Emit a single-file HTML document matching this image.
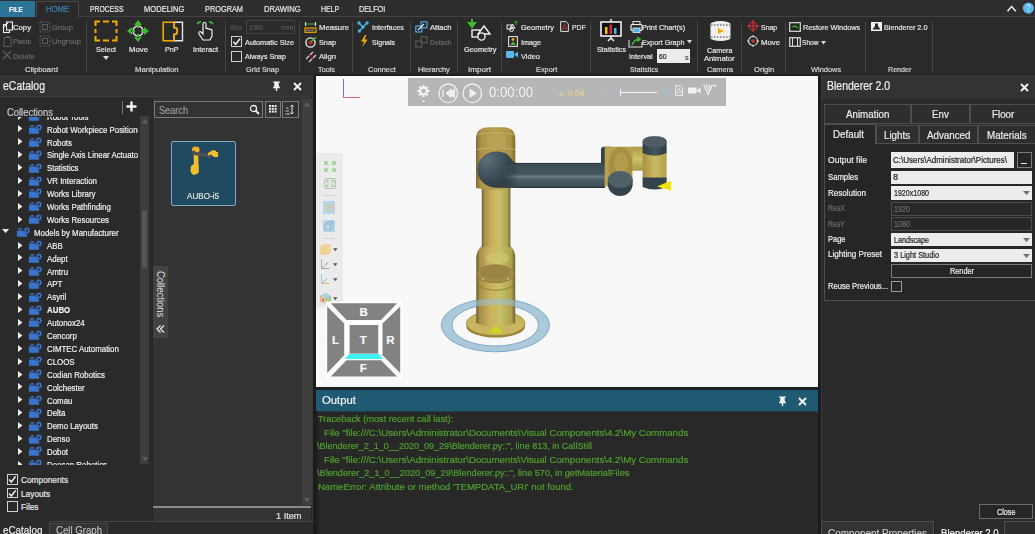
<!DOCTYPE html>
<html><head><meta charset="utf-8">
<style>
*{margin:0;padding:0;box-sizing:border-box}
html,body{width:1035px;height:534px;overflow:hidden;background:#1e1e1e;font-family:"Liberation Sans",sans-serif;}
.a{position:absolute}
.t{position:absolute;white-space:nowrap;line-height:normal;color:#e6e6e6;-webkit-text-stroke:0.2px currentColor}
svg{overflow:visible}
</style></head><body>
<div class="a" style="left:0px;top:0px;width:1035px;height:17px;background:#2e2e2e;"></div>
<div class="a" style="left:0px;top:16px;width:1035px;height:1px;background:#424242;"></div>
<div class="a" style="left:0px;top:1px;width:35px;height:15.5px;background:#2b7498;"></div>
<div class="t" style="left:8.9px;top:4.56px;font-size:8px;color:#f4f4f4;font-weight:bold;transform:scaleX(0.7962);transform-origin:0 0;">FILE</div>
<div class="a" style="left:36px;top:0.5px;width:43.2px;height:16.5px;background:#2a2a2a;border:1px solid #474747;border-bottom:none"></div>
<div class="t" style="left:46.1px;top:4.21px;font-size:8.5px;color:#3a84b8;transform:scaleX(0.9098);transform-origin:0 0;">HOME</div>
<div class="t" style="left:89.8px;top:4.21px;font-size:8.5px;color:#e8e8e8;transform:scaleX(0.8059);transform-origin:0 0;">PROCESS</div>
<div class="t" style="left:144px;top:4.21px;font-size:8.5px;color:#e8e8e8;transform:scaleX(0.8889);transform-origin:0 0;">MODELING</div>
<div class="t" style="left:205px;top:4.21px;font-size:8.5px;color:#e8e8e8;transform:scaleX(0.8652);transform-origin:0 0;">PROGRAM</div>
<div class="t" style="left:263.7px;top:4.21px;font-size:8.5px;color:#e8e8e8;transform:scaleX(0.8978);transform-origin:0 0;">DRAWING</div>
<div class="t" style="left:320.6px;top:4.21px;font-size:8.5px;color:#e8e8e8;transform:scaleX(0.8151);transform-origin:0 0;">HELP</div>
<div class="t" style="left:358.9px;top:4.21px;font-size:8.5px;color:#e8e8e8;transform:scaleX(0.8567);transform-origin:0 0;">DELFOI</div>
<svg class="a" style="left:1005px;top:3px;" width="14" height="10" viewBox="0 0 14 10"><path d="M2.5 8.3 L6.6 3.6 L10.8 8.3" stroke="#f4f4f4" stroke-width="1.5" fill="none"/></svg>
<svg class="a" style="left:1022px;top:2px;" width="13" height="13" viewBox="0 0 13 13"><circle cx="6.4" cy="6.1" r="5.6" fill="#5ab6ee"/><path d="M4.7 4.4 Q4.8 2.8 6.4 2.8 Q8 2.8 8 4.3 Q8 5.3 6.9 5.9 Q6.4 6.2 6.4 7.3" stroke="#f4f4f4" stroke-width="1" fill="none"/><rect x="5.9" y="8.3" width="1" height="1.1" fill="#f4f4f4"/></svg>
<div class="a" style="left:0px;top:17px;width:1035px;height:57px;background:#2a2a2a;"></div>
<div class="a" style="left:0px;top:74px;width:1035px;height:2px;background:#1e1e1e;"></div>
<div class="a" style="left:86px;top:21.7px;width:1px;height:50px;background:#464646;"></div>
<div class="a" style="left:224.7px;top:21.7px;width:1px;height:50px;background:#464646;"></div>
<div class="a" style="left:299.4px;top:21.7px;width:1px;height:50px;background:#464646;"></div>
<div class="a" style="left:351.9px;top:21.7px;width:1px;height:50px;background:#464646;"></div>
<div class="a" style="left:409.5px;top:21.7px;width:1px;height:50px;background:#464646;"></div>
<div class="a" style="left:456.6px;top:21.7px;width:1px;height:50px;background:#464646;"></div>
<div class="a" style="left:500.7px;top:21.7px;width:1px;height:50px;background:#464646;"></div>
<div class="a" style="left:589.8px;top:21.7px;width:1px;height:50px;background:#464646;"></div>
<div class="a" style="left:696.5px;top:21.7px;width:1px;height:50px;background:#464646;"></div>
<div class="a" style="left:741px;top:21.7px;width:1px;height:50px;background:#464646;"></div>
<div class="a" style="left:784.6px;top:21.7px;width:1px;height:50px;background:#464646;"></div>
<div class="a" style="left:865px;top:21.7px;width:1px;height:50px;background:#464646;"></div>
<div class="a" style="left:932.3px;top:21.7px;width:1px;height:50px;background:#464646;"></div>
<div class="t" style="left:25px;top:64.96px;font-size:8px;color:#d8d8d8;transform:scaleX(0.9637);transform-origin:0 0;">Clipboard</div>
<div class="t" style="left:134.8px;top:64.96px;font-size:8px;color:#d8d8d8;transform:scaleX(0.9611);transform-origin:0 0;">Manipulation</div>
<div class="t" style="left:246px;top:64.96px;font-size:8px;color:#d8d8d8;transform:scaleX(0.9162);transform-origin:0 0;">Grid Snap</div>
<div class="t" style="left:318px;top:64.96px;font-size:8px;color:#d8d8d8;transform:scaleX(0.9103);transform-origin:0 0;">Tools</div>
<div class="t" style="left:367.8px;top:64.96px;font-size:8px;color:#d8d8d8;transform:scaleX(0.9330);transform-origin:0 0;">Connect</div>
<div class="t" style="left:418px;top:64.96px;font-size:8px;color:#d8d8d8;transform:scaleX(0.9261);transform-origin:0 0;">Hierarchy</div>
<div class="t" style="left:468px;top:64.96px;font-size:8px;color:#d8d8d8;transform:scaleX(1.0145);transform-origin:0 0;">Import</div>
<div class="t" style="left:535.7px;top:64.96px;font-size:8px;color:#d8d8d8;transform:scaleX(0.9212);transform-origin:0 0;">Export</div>
<div class="t" style="left:630px;top:64.96px;font-size:8px;color:#d8d8d8;transform:scaleX(0.8873);transform-origin:0 0;">Statistics</div>
<div class="t" style="left:707px;top:64.96px;font-size:8px;color:#d8d8d8;transform:scaleX(0.9138);transform-origin:0 0;">Camera</div>
<div class="t" style="left:753.8px;top:64.96px;font-size:8px;color:#d8d8d8;transform:scaleX(0.9466);transform-origin:0 0;">Origin</div>
<div class="t" style="left:810.6px;top:64.96px;font-size:8px;color:#d8d8d8;transform:scaleX(0.9275);transform-origin:0 0;">Windows</div>
<div class="t" style="left:888px;top:64.96px;font-size:8px;color:#d8d8d8;transform:scaleX(0.8918);transform-origin:0 0;">Render</div>
<svg class="a" style="left:2px;top:21px;" width="11" height="12" viewBox="0 0 11 12"><rect x="1.5" y="3.5" width="6" height="8" fill="#2a2a2a" stroke="#eee" stroke-width="1.1"/><rect x="4.5" y="1" width="6" height="8" fill="#2a2a2a" stroke="#eee" stroke-width="1.1"/><path d="M2 6 L6 2" stroke="#eee"/></svg>
<div class="t" style="left:13px;top:22.56px;font-size:8px;color:#e6e6e6;transform:scaleX(0.9638);transform-origin:0 0;">Copy</div>
<svg class="a" style="left:3px;top:35px;" width="9" height="12" viewBox="0 0 9 12"><rect x="1" y="2.5" width="7" height="9" fill="none" stroke="#5c5c5c" stroke-width="1"/><rect x="3" y="1" width="3" height="2" fill="#5c5c5c"/></svg>
<div class="t" style="left:13px;top:37.26px;font-size:8px;color:#6a6a6a;transform:scaleX(0.9043);transform-origin:0 0;">Paste</div>
<svg class="a" style="left:2px;top:50px;" width="10" height="10" viewBox="0 0 10 10"><path d="M1 1 L9 9 M9 1 L1 9" stroke="#5c5c5c" stroke-width="1.2"/></svg>
<div class="t" style="left:13px;top:52.26px;font-size:8px;color:#6a6a6a;transform:scaleX(0.9513);transform-origin:0 0;">Delete</div>
<svg class="a" style="left:39px;top:21px;" width="12" height="12" viewBox="0 0 12 12"><rect x="1" y="1" width="10" height="10" fill="none" stroke="#5c5c5c" stroke-dasharray="2 1.5"/><rect x="3.5" y="3.5" width="5" height="5" fill="none" stroke="#5c5c5c"/></svg>
<div class="t" style="left:52px;top:22.56px;font-size:8px;color:#6a6a6a;transform:scaleX(0.9445);transform-origin:0 0;">Group</div>
<svg class="a" style="left:39px;top:35px;" width="12" height="12" viewBox="0 0 12 12"><rect x="1" y="1" width="10" height="10" fill="none" stroke="#5c5c5c" stroke-dasharray="2 1.5"/><rect x="3.5" y="3.5" width="5" height="5" fill="none" stroke="#5c5c5c"/></svg>
<div class="t" style="left:52px;top:37.26px;font-size:8px;color:#6a6a6a;transform:scaleX(0.9450);transform-origin:0 0;">Ungroup</div>
<svg class="a" style="left:94px;top:20px;" width="24" height="22" viewBox="0 0 24 22"><path d="M1.5 6 V1.5 H6 M9 1.5 H15 M18 1.5 H22.5 V6 M22.5 9 V13 M22.5 16 V20.5 H18 M15 20.5 H9 M6 20.5 H1.5 V16 M1.5 13 V9" fill="none" stroke="#f2a900" stroke-width="2"/></svg>
<div class="t" style="left:96px;top:45.16px;font-size:8px;color:#e6e6e6;transform:scaleX(0.8995);transform-origin:0 0;">Select</div>
<svg class="a" style="left:103px;top:56px;" width="6" height="4" viewBox="0 0 6 4"><path d="M0 0 L6 0 L3 4Z" fill="#ddd"/></svg>
<svg class="a" style="left:127px;top:20px;" width="22" height="22" viewBox="0 0 22 22"><circle cx="11" cy="11" r="5" fill="none" stroke="#eee" stroke-width="1.3"/><path d="M11 0 L15 5 L7 5Z M11 22 L15 17 L7 17Z M0 11 L5 7 L5 15Z M22 11 L17 7 L17 15Z M10 4 h2 v4 h-2z M10 14 h2 v4 h-2z M4 10 v2 h4 v-2z M14 10 v2 h4 v-2z" fill="#3dba2e"/></svg>
<div class="t" style="left:129px;top:45.16px;font-size:8px;color:#e6e6e6;transform:scaleX(0.9712);transform-origin:0 0;">Move</div>
<svg class="a" style="left:162px;top:21px;" width="22" height="21" viewBox="0 0 22 21"><path d="M20.5 1.2 H12 V6.5 C16.5 6.5 16.5 13.5 12 13.5 V19.8 H20.5Z" fill="none" stroke="#e6e6e6" stroke-width="1.4"/><path d="M12 1.2 H1.2 V19.8 H12 V13.5 C16.5 13.5 16.5 6.5 12 6.5Z" fill="none" stroke="#f2a900" stroke-width="1.6"/></svg>
<div class="t" style="left:165px;top:45.16px;font-size:8px;color:#e6e6e6;transform:scaleX(0.8928);transform-origin:0 0;">PnP</div>
<svg class="a" style="left:195px;top:19px;" width="20" height="23" viewBox="0 0 20 23"><path d="M8 21 L4 15 C3 13 5 12 6 13 L8 15 V5 C8 3 11 3 11 5 V10 C11 9 13 9 13 10.5 C13 9.5 15 9.5 15 11 C15 10 17 10 17 11.5 V17 L15 21Z" fill="none" stroke="#eee" stroke-width="1.2"/><path d="M2 5 Q4 2.5 6 3 M14 3 Q16 2.5 18 5" stroke="#3dba2e" stroke-width="1.8" fill="none"/></svg>
<div class="t" style="left:192.6px;top:45.16px;font-size:8px;color:#e6e6e6;transform:scaleX(0.9370);transform-origin:0 0;">Interact</div>
<div class="t" style="left:229.8px;top:22.76px;font-size:8px;color:#5a5a5a;transform:scaleX(0.8032);transform-origin:0 0;">Size</div>
<div class="a" style="left:246.4px;top:19.5px;width:48.4px;height:14.2px;background:transparent;border:1px solid #444"></div>
<div class="t" style="left:248.5px;top:22.76px;font-size:8px;color:#5a5a5a;transform:scaleX(0.7866);transform-origin:0 0;">1000</div>
<div class="t" style="left:280.5px;top:22.76px;font-size:8px;color:#5a5a5a;transform:scaleX(0.9379);transform-origin:0 0;">mm</div>
<div class="a" style="left:230.8px;top:35.6px;width:11.2px;height:11.2px;background:transparent;border:1px solid #cfcfcf"></div>
<svg class="a" style="left:230.8px;top:35.6px;" width="11.2" height="11.2" viewBox="0 0 11.2 11.2"><path d="M2.3 5.8 L4.6 8.3 L9 2.8" stroke="#f0f0f0" stroke-width="1.5" fill="none"/></svg>
<div class="a" style="left:230.8px;top:50.5px;width:11.2px;height:11.2px;background:transparent;border:1px solid #cfcfcf"></div>
<div class="t" style="left:245px;top:37.56px;font-size:8px;color:#e6e6e6;transform:scaleX(0.9184);transform-origin:0 0;">Automatic Size</div>
<div class="t" style="left:245px;top:52.26px;font-size:8px;color:#e6e6e6;transform:scaleX(0.8866);transform-origin:0 0;">Always Snap</div>
<svg class="a" style="left:304px;top:21px;" width="13" height="12" viewBox="0 0 13 12"><path d="M1.5 1 V5 M11.5 1 V5 M2 3 H11" stroke="#3dba2e" stroke-width="1.1" fill="none"/><path d="M1.5 1 V5 M11.5 1 V5" stroke="#ddd" stroke-width="1.1"/><rect x="1" y="7" width="11" height="4.3" fill="none" stroke="#f2a900" stroke-width="1.2"/><path d="M3 8.5 v1.5 M5 8.5 v1.5 M7 8.5 v1.5 M9 8.5 v1.5" stroke="#ddd" stroke-width="0.8"/></svg>
<div class="t" style="left:319px;top:22.76px;font-size:8px;color:#e6e6e6;transform:scaleX(0.9638);transform-origin:0 0;">Measure</div>
<svg class="a" style="left:305px;top:36px;" width="12" height="12" viewBox="0 0 12 12"><circle cx="5.5" cy="6.5" r="4.6" fill="none" stroke="#eee" stroke-width="1.3"/><circle cx="5.5" cy="6.5" r="2" fill="#d02020"/><path d="M6 6 L11 1" stroke="#3dba2e" stroke-width="1.5"/></svg>
<div class="t" style="left:319px;top:37.56px;font-size:8px;color:#e6e6e6;transform:scaleX(0.9099);transform-origin:0 0;">Snap</div>
<svg class="a" style="left:305px;top:51px;" width="12" height="12" viewBox="0 0 12 12"><path d="M1 8 L8 1 M4 11 L11 4" stroke="#ddd" stroke-width="1.1"/><circle cx="4.5" cy="4.5" r="1.1" fill="#d02020"/><circle cx="7.5" cy="7.5" r="1.1" fill="#d02020"/></svg>
<div class="t" style="left:319px;top:52.26px;font-size:8px;color:#e6e6e6;transform:scaleX(0.9556);transform-origin:0 0;">Align</div>
<svg class="a" style="left:357px;top:21px;" width="12" height="11" viewBox="0 0 12 11"><path d="M2 2 L6 6 L10 2 M6 6 L2.5 10" stroke="#4ab3ea" stroke-width="1.3" fill="none"/><circle cx="2" cy="2" r="1.7" fill="#4ab3ea"/><circle cx="10" cy="2" r="1.7" fill="#4ab3ea"/><circle cx="6" cy="6" r="1.7" fill="#4ab3ea"/><circle cx="2.5" cy="10" r="1.7" fill="#4ab3ea"/></svg>
<div class="t" style="left:372px;top:22.76px;font-size:8px;color:#e6e6e6;transform:scaleX(0.9109);transform-origin:0 0;">Interfaces</div>
<svg class="a" style="left:360px;top:35px;" width="8" height="12" viewBox="0 0 8 12"><path d="M5 0 L1 6.5 H4 L2.5 12 L7.5 4.5 H4.5 L6.5 0Z" fill="#f2a900"/></svg>
<div class="t" style="left:372px;top:37.56px;font-size:8px;color:#e6e6e6;transform:scaleX(0.8766);transform-origin:0 0;">Signals</div>
<svg class="a" style="left:415px;top:21px;" width="13" height="12" viewBox="0 0 13 12"><rect x="0.8" y="5" width="6" height="6" fill="none" stroke="#4ab3ea" stroke-width="1.1"/><rect x="6" y="0.8" width="6" height="6" fill="none" stroke="#4ab3ea" stroke-width="1.1"/><path d="M3 9 L9 3" stroke="#eee" stroke-width="1.1"/></svg>
<div class="t" style="left:429.6px;top:22.76px;font-size:8px;color:#e6e6e6;transform:scaleX(0.9524);transform-origin:0 0;">Attach</div>
<svg class="a" style="left:415px;top:36px;" width="13" height="12" viewBox="0 0 13 12"><rect x="0.8" y="5" width="6" height="6" fill="none" stroke="#5c5c5c" stroke-width="1.1"/><rect x="6" y="0.8" width="6" height="6" fill="none" stroke="#5c5c5c" stroke-width="1.1"/></svg>
<div class="t" style="left:429.6px;top:37.56px;font-size:8px;color:#6a6a6a;transform:scaleX(0.8521);transform-origin:0 0;">Detach</div>
<svg class="a" style="left:468px;top:19px;" width="24" height="24" viewBox="0 0 24 24"><path d="M4 0 V5 M1 4 L4 8 L7 4Z" stroke="#3dba2e" stroke-width="2" fill="#3dba2e"/><rect x="4" y="11" width="8" height="7" fill="#2a2a2a" stroke="#f0f0f0" stroke-width="1.4"/><path d="M16 7 L22 15 H10Z" fill="#2a2a2a" stroke="#f0f0f0" stroke-width="1.4"/><circle cx="13.5" cy="17.5" r="3.6" fill="#2a2a2a" stroke="#f0f0f0" stroke-width="1.4"/></svg>
<div class="t" style="left:463.6px;top:45.16px;font-size:8px;color:#e6e6e6;transform:scaleX(0.9225);transform-origin:0 0;">Geometry</div>
<svg class="a" style="left:506px;top:21px;" width="12" height="11" viewBox="0 0 12 11"><rect x="1" y="4" width="5" height="4" fill="none" stroke="#eee" stroke-width="1"/><path d="M6.5 3 L9 7 H4Z" fill="none" stroke="#eee" stroke-width="1"/><circle cx="5.5" cy="8.5" r="2" fill="none" stroke="#eee" stroke-width="1"/><path d="M10 0 V4 M8.5 1.5 L10 0 L11.5 1.5" stroke="#3dba2e" stroke-width="1"/></svg>
<div class="t" style="left:520.8px;top:22.76px;font-size:8px;color:#e6e6e6;transform:scaleX(0.9368);transform-origin:0 0;">Geometry</div>
<svg class="a" style="left:560px;top:21px;" width="9" height="11" viewBox="0 0 9 11"><path d="M0.6 0.6 H6 L8.4 3 V10.4 H0.6Z" fill="none" stroke="#ddd" stroke-width="1"/><path d="M2 8.5 C3 6 4 4 4.5 2.5 C5 5 6 7 7 7.5 C5 7 3 7.5 2 8.5Z" fill="none" stroke="#d03030" stroke-width="0.8"/></svg>
<div class="t" style="left:572.4px;top:22.76px;font-size:8px;color:#e6e6e6;transform:scaleX(0.8500);transform-origin:0 0;">PDF</div>
<svg class="a" style="left:508px;top:36px;" width="10" height="11" viewBox="0 0 10 11"><rect x="0.6" y="0.6" width="8.8" height="9.8" fill="none" stroke="#ddd" stroke-width="1.1"/><circle cx="5" cy="3.5" r="1.4" fill="#f2a900"/><path d="M2 9 L5 5.5 L8 9Z" fill="#3dba2e"/></svg>
<div class="t" style="left:521px;top:37.56px;font-size:8px;color:#e6e6e6;transform:scaleX(0.8995);transform-origin:0 0;">Image</div>
<svg class="a" style="left:506px;top:50px;" width="12" height="9" viewBox="0 0 12 9"><rect x="0" y="1" width="8" height="7" rx="1" fill="#5ab7ea"/><path d="M8 4.5 L12 1.5 V7.5Z" fill="#5ab7ea"/></svg>
<div class="t" style="left:521px;top:52.26px;font-size:8px;color:#e6e6e6;transform:scaleX(0.9352);transform-origin:0 0;">Video</div>
<svg class="a" style="left:600px;top:19px;" width="22" height="23" viewBox="0 0 22 23"><rect x="1" y="3" width="20" height="14" fill="#111" stroke="#f0f0f0" stroke-width="1.6"/><path d="M11 0 V3 M11 17 V20 M8 22 L11 19 L14 22" stroke="#f0f0f0" stroke-width="1.5" fill="none"/><rect x="5" y="8" width="2.5" height="7" fill="#f2c400"/><rect x="9.5" y="5.5" width="2.5" height="9.5" fill="#e02a2a"/><rect x="14" y="9" width="2.5" height="6" fill="#4ab3ea"/></svg>
<div class="t" style="left:596.5px;top:45.16px;font-size:8px;color:#e6e6e6;transform:scaleX(0.9060);transform-origin:0 0;">Statistics</div>
<svg class="a" style="left:630px;top:21px;" width="13" height="12" viewBox="0 0 13 12"><rect x="1" y="3.5" width="11" height="6" rx="1" fill="none" stroke="#eee" stroke-width="1.2"/><rect x="3" y="0.6" width="7" height="3" fill="none" stroke="#eee" stroke-width="1"/><rect x="3" y="7" width="7" height="4.5" fill="#4ab3ea" stroke="#eee" stroke-width="0.8"/></svg>
<div class="t" style="left:642.3px;top:22.76px;font-size:8px;color:#e6e6e6;transform:scaleX(0.9062);transform-origin:0 0;">Print Chart(s)</div>
<svg class="a" style="left:628px;top:36px;" width="15" height="12" viewBox="0 0 15 12"><path d="M1 4 V11 H14 V6" fill="none" stroke="#ddd" stroke-width="1.1"/><path d="M4 9 Q6 4 11 3 M9 1 L12 3 L9.5 5.5" stroke="#3dba2e" stroke-width="1.5" fill="none"/></svg>
<div class="t" style="left:642.3px;top:37.76px;font-size:8px;color:#e6e6e6;transform:scaleX(0.8933);transform-origin:0 0;">Export Graph</div>
<svg class="a" style="left:687px;top:40px;" width="5" height="3.5" viewBox="0 0 5 3.5"><path d="M0 0 H5 L2.5 3.5Z" fill="#ddd"/></svg>
<div class="t" style="left:629px;top:51.96px;font-size:8px;color:#e6e6e6;transform:scaleX(0.8996);transform-origin:0 0;">Interval</div>
<div class="a" style="left:656.8px;top:49.4px;width:32.9px;height:13.6px;background:#ececec;"></div>
<div class="t" style="left:659px;top:51.96px;font-size:8px;color:#222;transform:scaleX(0.8428);transform-origin:0 0;">60</div>
<div class="t" style="left:685px;top:53.66px;font-size:7px;color:#444;transform:scaleX(1.0000);transform-origin:0 0;">s</div>
<svg class="a" style="left:709px;top:20px;" width="23" height="22" viewBox="0 0 23 22"><ellipse cx="11.5" cy="4" rx="10" ry="3" fill="#f0f0f0"/><rect x="1.5" y="4" width="20" height="14" fill="#f0f0f0"/><ellipse cx="11.5" cy="18" rx="10" ry="3" fill="#f0f0f0"/><path d="M2 5 h19 M2 17 h19" stroke="#333" stroke-width="1" stroke-dasharray="1.5 1.5"/><path d="M9 8 L15 11 L9 14Z" fill="#f2a900"/></svg>
<div class="t" style="left:707.4px;top:45.96px;font-size:8px;color:#e6e6e6;transform:scaleX(0.8962);transform-origin:0 0;">Camera</div>
<div class="t" style="left:703.9px;top:53.76px;font-size:8px;color:#e6e6e6;transform:scaleX(0.9559);transform-origin:0 0;">Animator</div>
<svg class="a" style="left:747px;top:20px;" width="12" height="12" viewBox="0 0 12 12"><circle cx="6" cy="6" r="3.8" fill="none" stroke="#e03030" stroke-width="1.1"/><path d="M6 0 V12 M0 6 H12" stroke="#e03030" stroke-width="1.1"/></svg>
<div class="t" style="left:761.4px;top:22.76px;font-size:8px;color:#e6e6e6;transform:scaleX(0.8671);transform-origin:0 0;">Snap</div>
<svg class="a" style="left:747px;top:35px;" width="12" height="12" viewBox="0 0 12 12"><circle cx="6" cy="6" r="4.5" fill="none" stroke="#ddd" stroke-width="1.2"/><circle cx="6" cy="6" r="1.8" fill="#e03030"/><path d="M6 0 V1.5 M6 10.5 V12 M0 6 H1.5 M10.5 6 H12" stroke="#ddd" stroke-width="1"/></svg>
<div class="t" style="left:761.4px;top:37.56px;font-size:8px;color:#e6e6e6;transform:scaleX(0.9712);transform-origin:0 0;">Move</div>
<svg class="a" style="left:789px;top:22px;" width="12" height="10" viewBox="0 0 12 10"><rect x="0.7" y="0.7" width="10.6" height="8.6" fill="#1a2a1a" stroke="#ddd" stroke-width="1.2"/><path d="M3 5 L6 4 L9 6" stroke="#3dba2e" stroke-width="1.2" fill="none"/></svg>
<div class="t" style="left:803.2px;top:22.76px;font-size:8px;color:#e6e6e6;transform:scaleX(0.9125);transform-origin:0 0;">Restore Windows</div>
<svg class="a" style="left:789px;top:37px;" width="12" height="10" viewBox="0 0 12 10"><rect x="0.7" y="0.7" width="10.6" height="8.6" fill="none" stroke="#ddd" stroke-width="1.2"/><path d="M3.5 1 V9 M8.5 1 V9" stroke="#ddd" stroke-width="1"/></svg>
<div class="t" style="left:802px;top:37.76px;font-size:8px;color:#e6e6e6;transform:scaleX(0.8245);transform-origin:0 0;">Show</div>
<svg class="a" style="left:821px;top:41px;" width="5" height="3.5" viewBox="0 0 5 3.5"><path d="M0 0 H5 L2.5 3.5Z" fill="#ddd"/></svg>
<svg class="a" style="left:871px;top:22px;" width="11" height="9" viewBox="0 0 11 9"><rect x="0" y="0" width="11" height="9" fill="#f0f0f0"/><path d="M1.5 7.5 L4 4 H7 L9.5 7.5Z M4 4 V1.5 H7 V4" fill="#2a2a2a"/></svg>
<div class="t" style="left:883.6px;top:22.76px;font-size:8px;color:#e6e6e6;transform:scaleX(0.9036);transform-origin:0 0;">Blenderer 2.0</div>
<div class="a" style="left:0px;top:75px;width:313px;height:459px;background:#2a2a2a;"></div>
<div class="a" style="left:311.5px;top:75px;width:2px;height:447px;background:#3a3a3a;"></div>
<div class="a" style="left:313px;top:76px;width:3px;height:458px;background:#1c1c1c;"></div>
<div class="a" style="left:0px;top:75px;width:311.5px;height:21px;background:#333333;border-top:1px solid #393939"></div>
<div class="a" style="left:0px;top:95.5px;width:311px;height:1.5px;background:#3b3b3b;"></div>
<div class="t" style="left:3px;top:78.99px;font-size:12.5px;color:#eeeeee;transform:scaleX(0.8394);transform-origin:0 0;">eCatalog</div>
<svg class="a" style="left:272px;top:81px;" width="9" height="10" viewBox="0 0 9 10"><path d="M1.2 0.5 H7.8 V1.8 H6.6 L6.9 5.2 L8 6.4 V7.2 H1 V6.4 L2.1 5.2 L2.4 1.8 H1.2Z" fill="#f2f2f2"/><rect x="3.8" y="7" width="1.4" height="3" fill="#f2f2f2"/></svg>
<svg class="a" style="left:292.5px;top:82.2px;" width="9" height="9" viewBox="0 0 9 9"><path d="M1 1 L8 8 M8 1 L1 8" stroke="#f4f4f4" stroke-width="1.9"/></svg>
<div class="a" style="left:0px;top:97px;width:152px;height:425px;background:#2a2a2a;"></div>
<div class="a" style="left:151.5px;top:97px;width:1.7px;height:425px;background:#252525;"></div>
<div class="t" style="left:7px;top:105.55px;font-size:11px;color:#c8c8c8;transform:scaleX(0.8550);transform-origin:0 0;">Collections</div>
<div class="a" style="left:121.8px;top:101px;width:1px;height:13px;background:#777;"></div>
<svg class="a" style="left:126px;top:101px;" width="11" height="11" viewBox="0 0 11 11"><path d="M5.5 0.5 V10.5 M0.5 5.5 H10.5" stroke="#f4f4f4" stroke-width="2.4"/></svg>
<div class="a" style="left:139.7px;top:116px;width:9.5px;height:348px;background:#3d3d3d;"></div>
<svg class="a" style="left:141.5px;top:119px;" width="6" height="5" viewBox="0 0 6 5"><path d="M0 4.5 L3 0 L6 4.5Z" fill="#5e5e5e"/></svg>
<div class="a" style="left:141.8px;top:209.6px;width:5.6px;height:58px;background:#545454;border-radius:3px"></div>
<svg class="a" style="left:141.5px;top:457px;" width="6" height="5" viewBox="0 0 6 5"><path d="M0 0 L3 4.5 L6 0Z" fill="#5e5e5e"/></svg>
<div class="a" style="left:0;top:116.5px;width:137.5px;height:348.5px;overflow:hidden">
<div class="a" style="left:0;top:-116.5px;width:139px;height:600px">
<svg class="a" style="left:17.7px;top:112.5px;" width="4.4" height="7" viewBox="0 0 4.4 7"><path d="M0 0 L4.4 3.5 L0 7Z" fill="#eeeeee"/></svg>
<svg class="a" style="left:26px;top:109.0px;" width="20" height="14" viewBox="0 0 20 14"><path d="M3.9 4.8 C4.6 2.5 7.6 2.5 8.6 4.6Z" fill="#3a74cc"/><path d="M2.9 5.6 H9 L13.1 9.4 V11.8 H2.9Z" fill="#3a74cc"/><rect x="12.2" y="2.4" width="1.3" height="6.2" fill="#3a74cc" transform="rotate(0 12.85 5.5)"/><rect x="12.2" y="2.4" width="1.3" height="6.2" fill="#3a74cc" transform="rotate(45 12.85 5.5)"/><rect x="12.2" y="2.4" width="1.3" height="6.2" fill="#3a74cc" transform="rotate(90 12.85 5.5)"/><rect x="12.2" y="2.4" width="1.3" height="6.2" fill="#3a74cc" transform="rotate(135 12.85 5.5)"/><circle cx="12.85" cy="5.5" r="2.3" fill="#3a74cc"/><circle cx="12.85" cy="5.5" r="1.1" fill="#2a1a14"/></svg>
<div class="t" style="left:47px;top:111.79px;font-size:8.3px;color:#eeeeee;transform:scaleX(0.9500);transform-origin:0 0;">Robot Tools</div>
<svg class="a" style="left:17.7px;top:125.39999999999999px;" width="4.4" height="7" viewBox="0 0 4.4 7"><path d="M0 0 L4.4 3.5 L0 7Z" fill="#eeeeee"/></svg>
<svg class="a" style="left:26px;top:121.89999999999999px;" width="20" height="14" viewBox="0 0 20 14"><path d="M3.9 4.8 C4.6 2.5 7.6 2.5 8.6 4.6Z" fill="#3a74cc"/><path d="M2.9 5.6 H9 L13.1 9.4 V11.8 H2.9Z" fill="#3a74cc"/><rect x="12.2" y="2.4" width="1.3" height="6.2" fill="#3a74cc" transform="rotate(0 12.85 5.5)"/><rect x="12.2" y="2.4" width="1.3" height="6.2" fill="#3a74cc" transform="rotate(45 12.85 5.5)"/><rect x="12.2" y="2.4" width="1.3" height="6.2" fill="#3a74cc" transform="rotate(90 12.85 5.5)"/><rect x="12.2" y="2.4" width="1.3" height="6.2" fill="#3a74cc" transform="rotate(135 12.85 5.5)"/><circle cx="12.85" cy="5.5" r="2.3" fill="#3a74cc"/><circle cx="12.85" cy="5.5" r="1.1" fill="#2a1a14"/></svg>
<div class="t" style="left:47px;top:124.69px;font-size:8.3px;color:#eeeeee;transform:scaleX(0.9500);transform-origin:0 0;">Robot Workpiece Positioners</div>
<svg class="a" style="left:17.7px;top:138.29999999999998px;" width="4.4" height="7" viewBox="0 0 4.4 7"><path d="M0 0 L4.4 3.5 L0 7Z" fill="#eeeeee"/></svg>
<svg class="a" style="left:26px;top:134.79999999999998px;" width="20" height="14" viewBox="0 0 20 14"><path d="M3.9 4.8 C4.6 2.5 7.6 2.5 8.6 4.6Z" fill="#3a74cc"/><path d="M2.9 5.6 H9 L13.1 9.4 V11.8 H2.9Z" fill="#3a74cc"/><rect x="12.2" y="2.4" width="1.3" height="6.2" fill="#3a74cc" transform="rotate(0 12.85 5.5)"/><rect x="12.2" y="2.4" width="1.3" height="6.2" fill="#3a74cc" transform="rotate(45 12.85 5.5)"/><rect x="12.2" y="2.4" width="1.3" height="6.2" fill="#3a74cc" transform="rotate(90 12.85 5.5)"/><rect x="12.2" y="2.4" width="1.3" height="6.2" fill="#3a74cc" transform="rotate(135 12.85 5.5)"/><circle cx="12.85" cy="5.5" r="2.3" fill="#3a74cc"/><circle cx="12.85" cy="5.5" r="1.1" fill="#2a1a14"/></svg>
<div class="t" style="left:47px;top:137.59px;font-size:8.3px;color:#eeeeee;transform:scaleX(0.9500);transform-origin:0 0;">Robots</div>
<svg class="a" style="left:17.7px;top:151.2px;" width="4.4" height="7" viewBox="0 0 4.4 7"><path d="M0 0 L4.4 3.5 L0 7Z" fill="#eeeeee"/></svg>
<svg class="a" style="left:26px;top:147.7px;" width="20" height="14" viewBox="0 0 20 14"><path d="M3.9 4.8 C4.6 2.5 7.6 2.5 8.6 4.6Z" fill="#3a74cc"/><path d="M2.9 5.6 H9 L13.1 9.4 V11.8 H2.9Z" fill="#3a74cc"/><rect x="12.2" y="2.4" width="1.3" height="6.2" fill="#3a74cc" transform="rotate(0 12.85 5.5)"/><rect x="12.2" y="2.4" width="1.3" height="6.2" fill="#3a74cc" transform="rotate(45 12.85 5.5)"/><rect x="12.2" y="2.4" width="1.3" height="6.2" fill="#3a74cc" transform="rotate(90 12.85 5.5)"/><rect x="12.2" y="2.4" width="1.3" height="6.2" fill="#3a74cc" transform="rotate(135 12.85 5.5)"/><circle cx="12.85" cy="5.5" r="2.3" fill="#3a74cc"/><circle cx="12.85" cy="5.5" r="1.1" fill="#2a1a14"/></svg>
<div class="t" style="left:47px;top:150.49px;font-size:8.3px;color:#eeeeee;transform:scaleX(0.9500);transform-origin:0 0;">Single Axis Linear Actuators</div>
<svg class="a" style="left:17.7px;top:164.1px;" width="4.4" height="7" viewBox="0 0 4.4 7"><path d="M0 0 L4.4 3.5 L0 7Z" fill="#eeeeee"/></svg>
<svg class="a" style="left:26px;top:160.6px;" width="20" height="14" viewBox="0 0 20 14"><path d="M3.9 4.8 C4.6 2.5 7.6 2.5 8.6 4.6Z" fill="#3a74cc"/><path d="M2.9 5.6 H9 L13.1 9.4 V11.8 H2.9Z" fill="#3a74cc"/><rect x="12.2" y="2.4" width="1.3" height="6.2" fill="#3a74cc" transform="rotate(0 12.85 5.5)"/><rect x="12.2" y="2.4" width="1.3" height="6.2" fill="#3a74cc" transform="rotate(45 12.85 5.5)"/><rect x="12.2" y="2.4" width="1.3" height="6.2" fill="#3a74cc" transform="rotate(90 12.85 5.5)"/><rect x="12.2" y="2.4" width="1.3" height="6.2" fill="#3a74cc" transform="rotate(135 12.85 5.5)"/><circle cx="12.85" cy="5.5" r="2.3" fill="#3a74cc"/><circle cx="12.85" cy="5.5" r="1.1" fill="#2a1a14"/></svg>
<div class="t" style="left:47px;top:163.39px;font-size:8.3px;color:#eeeeee;transform:scaleX(0.9500);transform-origin:0 0;">Statistics</div>
<svg class="a" style="left:17.7px;top:177.0px;" width="4.4" height="7" viewBox="0 0 4.4 7"><path d="M0 0 L4.4 3.5 L0 7Z" fill="#eeeeee"/></svg>
<svg class="a" style="left:26px;top:173.5px;" width="20" height="14" viewBox="0 0 20 14"><path d="M3.9 4.8 C4.6 2.5 7.6 2.5 8.6 4.6Z" fill="#3a74cc"/><path d="M2.9 5.6 H9 L13.1 9.4 V11.8 H2.9Z" fill="#3a74cc"/><rect x="12.2" y="2.4" width="1.3" height="6.2" fill="#3a74cc" transform="rotate(0 12.85 5.5)"/><rect x="12.2" y="2.4" width="1.3" height="6.2" fill="#3a74cc" transform="rotate(45 12.85 5.5)"/><rect x="12.2" y="2.4" width="1.3" height="6.2" fill="#3a74cc" transform="rotate(90 12.85 5.5)"/><rect x="12.2" y="2.4" width="1.3" height="6.2" fill="#3a74cc" transform="rotate(135 12.85 5.5)"/><circle cx="12.85" cy="5.5" r="2.3" fill="#3a74cc"/><circle cx="12.85" cy="5.5" r="1.1" fill="#2a1a14"/></svg>
<div class="t" style="left:47px;top:176.29px;font-size:8.3px;color:#eeeeee;transform:scaleX(0.9500);transform-origin:0 0;">VR Interaction</div>
<svg class="a" style="left:17.7px;top:189.89999999999998px;" width="4.4" height="7" viewBox="0 0 4.4 7"><path d="M0 0 L4.4 3.5 L0 7Z" fill="#eeeeee"/></svg>
<svg class="a" style="left:26px;top:186.39999999999998px;" width="20" height="14" viewBox="0 0 20 14"><path d="M3.9 4.8 C4.6 2.5 7.6 2.5 8.6 4.6Z" fill="#3a74cc"/><path d="M2.9 5.6 H9 L13.1 9.4 V11.8 H2.9Z" fill="#3a74cc"/><rect x="12.2" y="2.4" width="1.3" height="6.2" fill="#3a74cc" transform="rotate(0 12.85 5.5)"/><rect x="12.2" y="2.4" width="1.3" height="6.2" fill="#3a74cc" transform="rotate(45 12.85 5.5)"/><rect x="12.2" y="2.4" width="1.3" height="6.2" fill="#3a74cc" transform="rotate(90 12.85 5.5)"/><rect x="12.2" y="2.4" width="1.3" height="6.2" fill="#3a74cc" transform="rotate(135 12.85 5.5)"/><circle cx="12.85" cy="5.5" r="2.3" fill="#3a74cc"/><circle cx="12.85" cy="5.5" r="1.1" fill="#2a1a14"/></svg>
<div class="t" style="left:47px;top:189.19px;font-size:8.3px;color:#eeeeee;transform:scaleX(0.9500);transform-origin:0 0;">Works Library</div>
<svg class="a" style="left:17.7px;top:202.79999999999998px;" width="4.4" height="7" viewBox="0 0 4.4 7"><path d="M0 0 L4.4 3.5 L0 7Z" fill="#eeeeee"/></svg>
<svg class="a" style="left:26px;top:199.29999999999998px;" width="20" height="14" viewBox="0 0 20 14"><path d="M3.9 4.8 C4.6 2.5 7.6 2.5 8.6 4.6Z" fill="#3a74cc"/><path d="M2.9 5.6 H9 L13.1 9.4 V11.8 H2.9Z" fill="#3a74cc"/><rect x="12.2" y="2.4" width="1.3" height="6.2" fill="#3a74cc" transform="rotate(0 12.85 5.5)"/><rect x="12.2" y="2.4" width="1.3" height="6.2" fill="#3a74cc" transform="rotate(45 12.85 5.5)"/><rect x="12.2" y="2.4" width="1.3" height="6.2" fill="#3a74cc" transform="rotate(90 12.85 5.5)"/><rect x="12.2" y="2.4" width="1.3" height="6.2" fill="#3a74cc" transform="rotate(135 12.85 5.5)"/><circle cx="12.85" cy="5.5" r="2.3" fill="#3a74cc"/><circle cx="12.85" cy="5.5" r="1.1" fill="#2a1a14"/></svg>
<div class="t" style="left:47px;top:202.09px;font-size:8.3px;color:#eeeeee;transform:scaleX(0.9500);transform-origin:0 0;">Works Pathfinding</div>
<svg class="a" style="left:17.7px;top:215.7px;" width="4.4" height="7" viewBox="0 0 4.4 7"><path d="M0 0 L4.4 3.5 L0 7Z" fill="#eeeeee"/></svg>
<svg class="a" style="left:26px;top:212.2px;" width="20" height="14" viewBox="0 0 20 14"><path d="M3.9 4.8 C4.6 2.5 7.6 2.5 8.6 4.6Z" fill="#3a74cc"/><path d="M2.9 5.6 H9 L13.1 9.4 V11.8 H2.9Z" fill="#3a74cc"/><rect x="12.2" y="2.4" width="1.3" height="6.2" fill="#3a74cc" transform="rotate(0 12.85 5.5)"/><rect x="12.2" y="2.4" width="1.3" height="6.2" fill="#3a74cc" transform="rotate(45 12.85 5.5)"/><rect x="12.2" y="2.4" width="1.3" height="6.2" fill="#3a74cc" transform="rotate(90 12.85 5.5)"/><rect x="12.2" y="2.4" width="1.3" height="6.2" fill="#3a74cc" transform="rotate(135 12.85 5.5)"/><circle cx="12.85" cy="5.5" r="2.3" fill="#3a74cc"/><circle cx="12.85" cy="5.5" r="1.1" fill="#2a1a14"/></svg>
<div class="t" style="left:47px;top:214.99px;font-size:8.3px;color:#eeeeee;transform:scaleX(0.9500);transform-origin:0 0;">Works Resources</div>
<svg class="a" style="left:2px;top:228.8px;" width="7.2" height="4" viewBox="0 0 7.2 4"><path d="M0 0 H7.2 L3.6 4Z" fill="#eeeeee"/></svg>
<svg class="a" style="left:13.6px;top:225.1px;" width="20" height="14" viewBox="0 0 20 14"><path d="M3.9 4.8 C4.6 2.5 7.6 2.5 8.6 4.6Z" fill="#3a74cc"/><path d="M2.9 5.6 H9 L13.1 9.4 V11.8 H2.9Z" fill="#3a74cc"/><rect x="12.2" y="2.4" width="1.3" height="6.2" fill="#3a74cc" transform="rotate(0 12.85 5.5)"/><rect x="12.2" y="2.4" width="1.3" height="6.2" fill="#3a74cc" transform="rotate(45 12.85 5.5)"/><rect x="12.2" y="2.4" width="1.3" height="6.2" fill="#3a74cc" transform="rotate(90 12.85 5.5)"/><rect x="12.2" y="2.4" width="1.3" height="6.2" fill="#3a74cc" transform="rotate(135 12.85 5.5)"/><circle cx="12.85" cy="5.5" r="2.3" fill="#3a74cc"/><circle cx="12.85" cy="5.5" r="1.1" fill="#2a1a14"/></svg>
<div class="t" style="left:34px;top:227.89px;font-size:8.3px;color:#eeeeee;transform:scaleX(0.9500);transform-origin:0 0;">Models by Manufacturer</div>
<svg class="a" style="left:17.7px;top:241.5px;" width="4.4" height="7" viewBox="0 0 4.4 7"><path d="M0 0 L4.4 3.5 L0 7Z" fill="#eeeeee"/></svg>
<svg class="a" style="left:26px;top:238.0px;" width="20" height="14" viewBox="0 0 20 14"><path d="M3.9 4.8 C4.6 2.5 7.6 2.5 8.6 4.6Z" fill="#3a74cc"/><path d="M2.9 5.6 H9 L13.1 9.4 V11.8 H2.9Z" fill="#3a74cc"/><rect x="12.2" y="2.4" width="1.3" height="6.2" fill="#3a74cc" transform="rotate(0 12.85 5.5)"/><rect x="12.2" y="2.4" width="1.3" height="6.2" fill="#3a74cc" transform="rotate(45 12.85 5.5)"/><rect x="12.2" y="2.4" width="1.3" height="6.2" fill="#3a74cc" transform="rotate(90 12.85 5.5)"/><rect x="12.2" y="2.4" width="1.3" height="6.2" fill="#3a74cc" transform="rotate(135 12.85 5.5)"/><circle cx="12.85" cy="5.5" r="2.3" fill="#3a74cc"/><circle cx="12.85" cy="5.5" r="1.1" fill="#2a1a14"/></svg>
<div class="t" style="left:47px;top:240.79px;font-size:8.3px;color:#eeeeee;transform:scaleX(0.9500);transform-origin:0 0;">ABB</div>
<svg class="a" style="left:17.7px;top:254.39999999999998px;" width="4.4" height="7" viewBox="0 0 4.4 7"><path d="M0 0 L4.4 3.5 L0 7Z" fill="#eeeeee"/></svg>
<svg class="a" style="left:26px;top:250.89999999999998px;" width="20" height="14" viewBox="0 0 20 14"><path d="M3.9 4.8 C4.6 2.5 7.6 2.5 8.6 4.6Z" fill="#3a74cc"/><path d="M2.9 5.6 H9 L13.1 9.4 V11.8 H2.9Z" fill="#3a74cc"/><rect x="12.2" y="2.4" width="1.3" height="6.2" fill="#3a74cc" transform="rotate(0 12.85 5.5)"/><rect x="12.2" y="2.4" width="1.3" height="6.2" fill="#3a74cc" transform="rotate(45 12.85 5.5)"/><rect x="12.2" y="2.4" width="1.3" height="6.2" fill="#3a74cc" transform="rotate(90 12.85 5.5)"/><rect x="12.2" y="2.4" width="1.3" height="6.2" fill="#3a74cc" transform="rotate(135 12.85 5.5)"/><circle cx="12.85" cy="5.5" r="2.3" fill="#3a74cc"/><circle cx="12.85" cy="5.5" r="1.1" fill="#2a1a14"/></svg>
<div class="t" style="left:47px;top:253.69px;font-size:8.3px;color:#eeeeee;transform:scaleX(0.9500);transform-origin:0 0;">Adept</div>
<svg class="a" style="left:17.7px;top:267.3px;" width="4.4" height="7" viewBox="0 0 4.4 7"><path d="M0 0 L4.4 3.5 L0 7Z" fill="#eeeeee"/></svg>
<svg class="a" style="left:26px;top:263.8px;" width="20" height="14" viewBox="0 0 20 14"><path d="M3.9 4.8 C4.6 2.5 7.6 2.5 8.6 4.6Z" fill="#3a74cc"/><path d="M2.9 5.6 H9 L13.1 9.4 V11.8 H2.9Z" fill="#3a74cc"/><rect x="12.2" y="2.4" width="1.3" height="6.2" fill="#3a74cc" transform="rotate(0 12.85 5.5)"/><rect x="12.2" y="2.4" width="1.3" height="6.2" fill="#3a74cc" transform="rotate(45 12.85 5.5)"/><rect x="12.2" y="2.4" width="1.3" height="6.2" fill="#3a74cc" transform="rotate(90 12.85 5.5)"/><rect x="12.2" y="2.4" width="1.3" height="6.2" fill="#3a74cc" transform="rotate(135 12.85 5.5)"/><circle cx="12.85" cy="5.5" r="2.3" fill="#3a74cc"/><circle cx="12.85" cy="5.5" r="1.1" fill="#2a1a14"/></svg>
<div class="t" style="left:47px;top:266.59px;font-size:8.3px;color:#eeeeee;transform:scaleX(0.9500);transform-origin:0 0;">Amtru</div>
<svg class="a" style="left:17.7px;top:280.2px;" width="4.4" height="7" viewBox="0 0 4.4 7"><path d="M0 0 L4.4 3.5 L0 7Z" fill="#eeeeee"/></svg>
<svg class="a" style="left:26px;top:276.7px;" width="20" height="14" viewBox="0 0 20 14"><path d="M3.9 4.8 C4.6 2.5 7.6 2.5 8.6 4.6Z" fill="#3a74cc"/><path d="M2.9 5.6 H9 L13.1 9.4 V11.8 H2.9Z" fill="#3a74cc"/><rect x="12.2" y="2.4" width="1.3" height="6.2" fill="#3a74cc" transform="rotate(0 12.85 5.5)"/><rect x="12.2" y="2.4" width="1.3" height="6.2" fill="#3a74cc" transform="rotate(45 12.85 5.5)"/><rect x="12.2" y="2.4" width="1.3" height="6.2" fill="#3a74cc" transform="rotate(90 12.85 5.5)"/><rect x="12.2" y="2.4" width="1.3" height="6.2" fill="#3a74cc" transform="rotate(135 12.85 5.5)"/><circle cx="12.85" cy="5.5" r="2.3" fill="#3a74cc"/><circle cx="12.85" cy="5.5" r="1.1" fill="#2a1a14"/></svg>
<div class="t" style="left:47px;top:279.49px;font-size:8.3px;color:#eeeeee;transform:scaleX(0.9500);transform-origin:0 0;">APT</div>
<svg class="a" style="left:17.7px;top:293.09999999999997px;" width="4.4" height="7" viewBox="0 0 4.4 7"><path d="M0 0 L4.4 3.5 L0 7Z" fill="#eeeeee"/></svg>
<svg class="a" style="left:26px;top:289.59999999999997px;" width="20" height="14" viewBox="0 0 20 14"><path d="M3.9 4.8 C4.6 2.5 7.6 2.5 8.6 4.6Z" fill="#3a74cc"/><path d="M2.9 5.6 H9 L13.1 9.4 V11.8 H2.9Z" fill="#3a74cc"/><rect x="12.2" y="2.4" width="1.3" height="6.2" fill="#3a74cc" transform="rotate(0 12.85 5.5)"/><rect x="12.2" y="2.4" width="1.3" height="6.2" fill="#3a74cc" transform="rotate(45 12.85 5.5)"/><rect x="12.2" y="2.4" width="1.3" height="6.2" fill="#3a74cc" transform="rotate(90 12.85 5.5)"/><rect x="12.2" y="2.4" width="1.3" height="6.2" fill="#3a74cc" transform="rotate(135 12.85 5.5)"/><circle cx="12.85" cy="5.5" r="2.3" fill="#3a74cc"/><circle cx="12.85" cy="5.5" r="1.1" fill="#2a1a14"/></svg>
<div class="t" style="left:47px;top:292.39px;font-size:8.3px;color:#eeeeee;transform:scaleX(0.9500);transform-origin:0 0;">Asyril</div>
<svg class="a" style="left:17.7px;top:306.0px;" width="4.4" height="7" viewBox="0 0 4.4 7"><path d="M0 0 L4.4 3.5 L0 7Z" fill="#eeeeee"/></svg>
<svg class="a" style="left:26px;top:302.5px;" width="20" height="14" viewBox="0 0 20 14"><path d="M3.9 4.8 C4.6 2.5 7.6 2.5 8.6 4.6Z" fill="#3a74cc"/><path d="M2.9 5.6 H9 L13.1 9.4 V11.8 H2.9Z" fill="#3a74cc"/><rect x="12.2" y="2.4" width="1.3" height="6.2" fill="#3a74cc" transform="rotate(0 12.85 5.5)"/><rect x="12.2" y="2.4" width="1.3" height="6.2" fill="#3a74cc" transform="rotate(45 12.85 5.5)"/><rect x="12.2" y="2.4" width="1.3" height="6.2" fill="#3a74cc" transform="rotate(90 12.85 5.5)"/><rect x="12.2" y="2.4" width="1.3" height="6.2" fill="#3a74cc" transform="rotate(135 12.85 5.5)"/><circle cx="12.85" cy="5.5" r="2.3" fill="#3a74cc"/><circle cx="12.85" cy="5.5" r="1.1" fill="#2a1a14"/></svg>
<div class="t" style="left:47px;top:305.29px;font-size:8.3px;color:#eeeeee;font-weight:bold;transform:scaleX(0.9500);transform-origin:0 0;">AUBO</div>
<svg class="a" style="left:17.7px;top:318.9px;" width="4.4" height="7" viewBox="0 0 4.4 7"><path d="M0 0 L4.4 3.5 L0 7Z" fill="#eeeeee"/></svg>
<svg class="a" style="left:26px;top:315.4px;" width="20" height="14" viewBox="0 0 20 14"><path d="M3.9 4.8 C4.6 2.5 7.6 2.5 8.6 4.6Z" fill="#3a74cc"/><path d="M2.9 5.6 H9 L13.1 9.4 V11.8 H2.9Z" fill="#3a74cc"/><rect x="12.2" y="2.4" width="1.3" height="6.2" fill="#3a74cc" transform="rotate(0 12.85 5.5)"/><rect x="12.2" y="2.4" width="1.3" height="6.2" fill="#3a74cc" transform="rotate(45 12.85 5.5)"/><rect x="12.2" y="2.4" width="1.3" height="6.2" fill="#3a74cc" transform="rotate(90 12.85 5.5)"/><rect x="12.2" y="2.4" width="1.3" height="6.2" fill="#3a74cc" transform="rotate(135 12.85 5.5)"/><circle cx="12.85" cy="5.5" r="2.3" fill="#3a74cc"/><circle cx="12.85" cy="5.5" r="1.1" fill="#2a1a14"/></svg>
<div class="t" style="left:47px;top:318.19px;font-size:8.3px;color:#eeeeee;transform:scaleX(0.9500);transform-origin:0 0;">Autonox24</div>
<svg class="a" style="left:17.7px;top:331.8px;" width="4.4" height="7" viewBox="0 0 4.4 7"><path d="M0 0 L4.4 3.5 L0 7Z" fill="#eeeeee"/></svg>
<svg class="a" style="left:26px;top:328.3px;" width="20" height="14" viewBox="0 0 20 14"><path d="M3.9 4.8 C4.6 2.5 7.6 2.5 8.6 4.6Z" fill="#3a74cc"/><path d="M2.9 5.6 H9 L13.1 9.4 V11.8 H2.9Z" fill="#3a74cc"/><rect x="12.2" y="2.4" width="1.3" height="6.2" fill="#3a74cc" transform="rotate(0 12.85 5.5)"/><rect x="12.2" y="2.4" width="1.3" height="6.2" fill="#3a74cc" transform="rotate(45 12.85 5.5)"/><rect x="12.2" y="2.4" width="1.3" height="6.2" fill="#3a74cc" transform="rotate(90 12.85 5.5)"/><rect x="12.2" y="2.4" width="1.3" height="6.2" fill="#3a74cc" transform="rotate(135 12.85 5.5)"/><circle cx="12.85" cy="5.5" r="2.3" fill="#3a74cc"/><circle cx="12.85" cy="5.5" r="1.1" fill="#2a1a14"/></svg>
<div class="t" style="left:47px;top:331.09px;font-size:8.3px;color:#eeeeee;transform:scaleX(0.9500);transform-origin:0 0;">Cencorp</div>
<svg class="a" style="left:17.7px;top:344.7px;" width="4.4" height="7" viewBox="0 0 4.4 7"><path d="M0 0 L4.4 3.5 L0 7Z" fill="#eeeeee"/></svg>
<svg class="a" style="left:26px;top:341.2px;" width="20" height="14" viewBox="0 0 20 14"><path d="M3.9 4.8 C4.6 2.5 7.6 2.5 8.6 4.6Z" fill="#3a74cc"/><path d="M2.9 5.6 H9 L13.1 9.4 V11.8 H2.9Z" fill="#3a74cc"/><rect x="12.2" y="2.4" width="1.3" height="6.2" fill="#3a74cc" transform="rotate(0 12.85 5.5)"/><rect x="12.2" y="2.4" width="1.3" height="6.2" fill="#3a74cc" transform="rotate(45 12.85 5.5)"/><rect x="12.2" y="2.4" width="1.3" height="6.2" fill="#3a74cc" transform="rotate(90 12.85 5.5)"/><rect x="12.2" y="2.4" width="1.3" height="6.2" fill="#3a74cc" transform="rotate(135 12.85 5.5)"/><circle cx="12.85" cy="5.5" r="2.3" fill="#3a74cc"/><circle cx="12.85" cy="5.5" r="1.1" fill="#2a1a14"/></svg>
<div class="t" style="left:47px;top:343.99px;font-size:8.3px;color:#eeeeee;transform:scaleX(0.9500);transform-origin:0 0;">CIMTEC Automation</div>
<svg class="a" style="left:17.7px;top:357.59999999999997px;" width="4.4" height="7" viewBox="0 0 4.4 7"><path d="M0 0 L4.4 3.5 L0 7Z" fill="#eeeeee"/></svg>
<svg class="a" style="left:26px;top:354.09999999999997px;" width="20" height="14" viewBox="0 0 20 14"><path d="M3.9 4.8 C4.6 2.5 7.6 2.5 8.6 4.6Z" fill="#3a74cc"/><path d="M2.9 5.6 H9 L13.1 9.4 V11.8 H2.9Z" fill="#3a74cc"/><rect x="12.2" y="2.4" width="1.3" height="6.2" fill="#3a74cc" transform="rotate(0 12.85 5.5)"/><rect x="12.2" y="2.4" width="1.3" height="6.2" fill="#3a74cc" transform="rotate(45 12.85 5.5)"/><rect x="12.2" y="2.4" width="1.3" height="6.2" fill="#3a74cc" transform="rotate(90 12.85 5.5)"/><rect x="12.2" y="2.4" width="1.3" height="6.2" fill="#3a74cc" transform="rotate(135 12.85 5.5)"/><circle cx="12.85" cy="5.5" r="2.3" fill="#3a74cc"/><circle cx="12.85" cy="5.5" r="1.1" fill="#2a1a14"/></svg>
<div class="t" style="left:47px;top:356.89px;font-size:8.3px;color:#eeeeee;transform:scaleX(0.9500);transform-origin:0 0;">CLOOS</div>
<svg class="a" style="left:17.7px;top:370.5px;" width="4.4" height="7" viewBox="0 0 4.4 7"><path d="M0 0 L4.4 3.5 L0 7Z" fill="#eeeeee"/></svg>
<svg class="a" style="left:26px;top:367.0px;" width="20" height="14" viewBox="0 0 20 14"><path d="M3.9 4.8 C4.6 2.5 7.6 2.5 8.6 4.6Z" fill="#3a74cc"/><path d="M2.9 5.6 H9 L13.1 9.4 V11.8 H2.9Z" fill="#3a74cc"/><rect x="12.2" y="2.4" width="1.3" height="6.2" fill="#3a74cc" transform="rotate(0 12.85 5.5)"/><rect x="12.2" y="2.4" width="1.3" height="6.2" fill="#3a74cc" transform="rotate(45 12.85 5.5)"/><rect x="12.2" y="2.4" width="1.3" height="6.2" fill="#3a74cc" transform="rotate(90 12.85 5.5)"/><rect x="12.2" y="2.4" width="1.3" height="6.2" fill="#3a74cc" transform="rotate(135 12.85 5.5)"/><circle cx="12.85" cy="5.5" r="2.3" fill="#3a74cc"/><circle cx="12.85" cy="5.5" r="1.1" fill="#2a1a14"/></svg>
<div class="t" style="left:47px;top:369.79px;font-size:8.3px;color:#eeeeee;transform:scaleX(0.9500);transform-origin:0 0;">Codian Robotics</div>
<svg class="a" style="left:17.7px;top:383.40000000000003px;" width="4.4" height="7" viewBox="0 0 4.4 7"><path d="M0 0 L4.4 3.5 L0 7Z" fill="#eeeeee"/></svg>
<svg class="a" style="left:26px;top:379.90000000000003px;" width="20" height="14" viewBox="0 0 20 14"><path d="M3.9 4.8 C4.6 2.5 7.6 2.5 8.6 4.6Z" fill="#3a74cc"/><path d="M2.9 5.6 H9 L13.1 9.4 V11.8 H2.9Z" fill="#3a74cc"/><rect x="12.2" y="2.4" width="1.3" height="6.2" fill="#3a74cc" transform="rotate(0 12.85 5.5)"/><rect x="12.2" y="2.4" width="1.3" height="6.2" fill="#3a74cc" transform="rotate(45 12.85 5.5)"/><rect x="12.2" y="2.4" width="1.3" height="6.2" fill="#3a74cc" transform="rotate(90 12.85 5.5)"/><rect x="12.2" y="2.4" width="1.3" height="6.2" fill="#3a74cc" transform="rotate(135 12.85 5.5)"/><circle cx="12.85" cy="5.5" r="2.3" fill="#3a74cc"/><circle cx="12.85" cy="5.5" r="1.1" fill="#2a1a14"/></svg>
<div class="t" style="left:47px;top:382.69px;font-size:8.3px;color:#eeeeee;transform:scaleX(0.9500);transform-origin:0 0;">Colchester</div>
<svg class="a" style="left:17.7px;top:396.3px;" width="4.4" height="7" viewBox="0 0 4.4 7"><path d="M0 0 L4.4 3.5 L0 7Z" fill="#eeeeee"/></svg>
<svg class="a" style="left:26px;top:392.8px;" width="20" height="14" viewBox="0 0 20 14"><path d="M3.9 4.8 C4.6 2.5 7.6 2.5 8.6 4.6Z" fill="#3a74cc"/><path d="M2.9 5.6 H9 L13.1 9.4 V11.8 H2.9Z" fill="#3a74cc"/><rect x="12.2" y="2.4" width="1.3" height="6.2" fill="#3a74cc" transform="rotate(0 12.85 5.5)"/><rect x="12.2" y="2.4" width="1.3" height="6.2" fill="#3a74cc" transform="rotate(45 12.85 5.5)"/><rect x="12.2" y="2.4" width="1.3" height="6.2" fill="#3a74cc" transform="rotate(90 12.85 5.5)"/><rect x="12.2" y="2.4" width="1.3" height="6.2" fill="#3a74cc" transform="rotate(135 12.85 5.5)"/><circle cx="12.85" cy="5.5" r="2.3" fill="#3a74cc"/><circle cx="12.85" cy="5.5" r="1.1" fill="#2a1a14"/></svg>
<div class="t" style="left:47px;top:395.59px;font-size:8.3px;color:#eeeeee;transform:scaleX(0.9500);transform-origin:0 0;">Comau</div>
<svg class="a" style="left:17.7px;top:409.2px;" width="4.4" height="7" viewBox="0 0 4.4 7"><path d="M0 0 L4.4 3.5 L0 7Z" fill="#eeeeee"/></svg>
<svg class="a" style="left:26px;top:405.7px;" width="20" height="14" viewBox="0 0 20 14"><path d="M3.9 4.8 C4.6 2.5 7.6 2.5 8.6 4.6Z" fill="#3a74cc"/><path d="M2.9 5.6 H9 L13.1 9.4 V11.8 H2.9Z" fill="#3a74cc"/><rect x="12.2" y="2.4" width="1.3" height="6.2" fill="#3a74cc" transform="rotate(0 12.85 5.5)"/><rect x="12.2" y="2.4" width="1.3" height="6.2" fill="#3a74cc" transform="rotate(45 12.85 5.5)"/><rect x="12.2" y="2.4" width="1.3" height="6.2" fill="#3a74cc" transform="rotate(90 12.85 5.5)"/><rect x="12.2" y="2.4" width="1.3" height="6.2" fill="#3a74cc" transform="rotate(135 12.85 5.5)"/><circle cx="12.85" cy="5.5" r="2.3" fill="#3a74cc"/><circle cx="12.85" cy="5.5" r="1.1" fill="#2a1a14"/></svg>
<div class="t" style="left:47px;top:408.49px;font-size:8.3px;color:#eeeeee;transform:scaleX(0.9500);transform-origin:0 0;">Delta</div>
<svg class="a" style="left:17.7px;top:422.1px;" width="4.4" height="7" viewBox="0 0 4.4 7"><path d="M0 0 L4.4 3.5 L0 7Z" fill="#eeeeee"/></svg>
<svg class="a" style="left:26px;top:418.6px;" width="20" height="14" viewBox="0 0 20 14"><path d="M3.9 4.8 C4.6 2.5 7.6 2.5 8.6 4.6Z" fill="#3a74cc"/><path d="M2.9 5.6 H9 L13.1 9.4 V11.8 H2.9Z" fill="#3a74cc"/><rect x="12.2" y="2.4" width="1.3" height="6.2" fill="#3a74cc" transform="rotate(0 12.85 5.5)"/><rect x="12.2" y="2.4" width="1.3" height="6.2" fill="#3a74cc" transform="rotate(45 12.85 5.5)"/><rect x="12.2" y="2.4" width="1.3" height="6.2" fill="#3a74cc" transform="rotate(90 12.85 5.5)"/><rect x="12.2" y="2.4" width="1.3" height="6.2" fill="#3a74cc" transform="rotate(135 12.85 5.5)"/><circle cx="12.85" cy="5.5" r="2.3" fill="#3a74cc"/><circle cx="12.85" cy="5.5" r="1.1" fill="#2a1a14"/></svg>
<div class="t" style="left:47px;top:421.39px;font-size:8.3px;color:#eeeeee;transform:scaleX(0.9500);transform-origin:0 0;">Demo Layouts</div>
<svg class="a" style="left:17.7px;top:435.0px;" width="4.4" height="7" viewBox="0 0 4.4 7"><path d="M0 0 L4.4 3.5 L0 7Z" fill="#eeeeee"/></svg>
<svg class="a" style="left:26px;top:431.5px;" width="20" height="14" viewBox="0 0 20 14"><path d="M3.9 4.8 C4.6 2.5 7.6 2.5 8.6 4.6Z" fill="#3a74cc"/><path d="M2.9 5.6 H9 L13.1 9.4 V11.8 H2.9Z" fill="#3a74cc"/><rect x="12.2" y="2.4" width="1.3" height="6.2" fill="#3a74cc" transform="rotate(0 12.85 5.5)"/><rect x="12.2" y="2.4" width="1.3" height="6.2" fill="#3a74cc" transform="rotate(45 12.85 5.5)"/><rect x="12.2" y="2.4" width="1.3" height="6.2" fill="#3a74cc" transform="rotate(90 12.85 5.5)"/><rect x="12.2" y="2.4" width="1.3" height="6.2" fill="#3a74cc" transform="rotate(135 12.85 5.5)"/><circle cx="12.85" cy="5.5" r="2.3" fill="#3a74cc"/><circle cx="12.85" cy="5.5" r="1.1" fill="#2a1a14"/></svg>
<div class="t" style="left:47px;top:434.29px;font-size:8.3px;color:#eeeeee;transform:scaleX(0.9500);transform-origin:0 0;">Denso</div>
<svg class="a" style="left:17.7px;top:447.90000000000003px;" width="4.4" height="7" viewBox="0 0 4.4 7"><path d="M0 0 L4.4 3.5 L0 7Z" fill="#eeeeee"/></svg>
<svg class="a" style="left:26px;top:444.40000000000003px;" width="20" height="14" viewBox="0 0 20 14"><path d="M3.9 4.8 C4.6 2.5 7.6 2.5 8.6 4.6Z" fill="#3a74cc"/><path d="M2.9 5.6 H9 L13.1 9.4 V11.8 H2.9Z" fill="#3a74cc"/><rect x="12.2" y="2.4" width="1.3" height="6.2" fill="#3a74cc" transform="rotate(0 12.85 5.5)"/><rect x="12.2" y="2.4" width="1.3" height="6.2" fill="#3a74cc" transform="rotate(45 12.85 5.5)"/><rect x="12.2" y="2.4" width="1.3" height="6.2" fill="#3a74cc" transform="rotate(90 12.85 5.5)"/><rect x="12.2" y="2.4" width="1.3" height="6.2" fill="#3a74cc" transform="rotate(135 12.85 5.5)"/><circle cx="12.85" cy="5.5" r="2.3" fill="#3a74cc"/><circle cx="12.85" cy="5.5" r="1.1" fill="#2a1a14"/></svg>
<div class="t" style="left:47px;top:447.19px;font-size:8.3px;color:#eeeeee;transform:scaleX(0.9500);transform-origin:0 0;">Dobot</div>
<svg class="a" style="left:17.7px;top:460.8px;" width="4.4" height="7" viewBox="0 0 4.4 7"><path d="M0 0 L4.4 3.5 L0 7Z" fill="#eeeeee"/></svg>
<svg class="a" style="left:26px;top:457.3px;" width="20" height="14" viewBox="0 0 20 14"><path d="M3.9 4.8 C4.6 2.5 7.6 2.5 8.6 4.6Z" fill="#3a74cc"/><path d="M2.9 5.6 H9 L13.1 9.4 V11.8 H2.9Z" fill="#3a74cc"/><rect x="12.2" y="2.4" width="1.3" height="6.2" fill="#3a74cc" transform="rotate(0 12.85 5.5)"/><rect x="12.2" y="2.4" width="1.3" height="6.2" fill="#3a74cc" transform="rotate(45 12.85 5.5)"/><rect x="12.2" y="2.4" width="1.3" height="6.2" fill="#3a74cc" transform="rotate(90 12.85 5.5)"/><rect x="12.2" y="2.4" width="1.3" height="6.2" fill="#3a74cc" transform="rotate(135 12.85 5.5)"/><circle cx="12.85" cy="5.5" r="2.3" fill="#3a74cc"/><circle cx="12.85" cy="5.5" r="1.1" fill="#2a1a14"/></svg>
<div class="t" style="left:47px;top:460.09px;font-size:8.3px;color:#eeeeee;transform:scaleX(0.9500);transform-origin:0 0;">Doosan Robotics</div>
</div></div>
<div class="a" style="left:7px;top:474.0px;width:10.5px;height:10.5px;background:transparent;border:1px solid #d0d0d0"></div>
<svg class="a" style="left:7px;top:474.0px;" width="10.5" height="10.5" viewBox="0 0 10.5 10.5"><path d="M2 5.5 L4.3 8 L8.6 2.4" stroke="#f2f2f2" stroke-width="1.5" fill="none"/></svg>
<div class="t" style="left:21px;top:475.19px;font-size:8.3px;color:#e6e6e6;">Components</div>
<div class="a" style="left:7px;top:487.6px;width:10.5px;height:10.5px;background:transparent;border:1px solid #d0d0d0"></div>
<svg class="a" style="left:7px;top:487.6px;" width="10.5" height="10.5" viewBox="0 0 10.5 10.5"><path d="M2 5.5 L4.3 8 L8.6 2.4" stroke="#f2f2f2" stroke-width="1.5" fill="none"/></svg>
<div class="t" style="left:21px;top:488.79px;font-size:8.3px;color:#e6e6e6;">Layouts</div>
<div class="a" style="left:7px;top:501.2px;width:10.5px;height:10.5px;background:transparent;border:1px solid #d0d0d0"></div>
<div class="t" style="left:21px;top:502.39px;font-size:8.3px;color:#e6e6e6;">Files</div>
<div class="a" style="left:153.2px;top:97px;width:158px;height:425px;background:#333333;"></div>
<div class="a" style="left:154px;top:101.3px;width:109px;height:17px;background:transparent;border:1px solid #7a7a7a"></div>
<div class="t" style="left:159px;top:104.95px;font-size:10px;color:#9a9a9a;transform:scaleX(0.9153);transform-origin:0 0;">Search</div>
<svg class="a" style="left:249px;top:104px;" width="11" height="11" viewBox="0 0 11 11"><circle cx="4.5" cy="4.5" r="3" fill="none" stroke="#eee" stroke-width="1.3"/><path d="M6.5 6.5 L10 10" stroke="#eee" stroke-width="2"/></svg>
<div class="a" style="left:264.5px;top:101.3px;width:16px;height:17px;background:transparent;border:1px solid #7a7a7a"></div>
<svg class="a" style="left:267.5px;top:104px;" width="10" height="10" viewBox="0 0 10 10"><rect x="1.0" y="1.0" width="2" height="2" fill="#eee"/><rect x="3.8" y="1.0" width="2" height="2" fill="#eee"/><rect x="6.6" y="1.0" width="2" height="2" fill="#eee"/><rect x="1.0" y="3.8" width="2" height="2" fill="#eee"/><rect x="3.8" y="3.8" width="2" height="2" fill="#eee"/><rect x="6.6" y="3.8" width="2" height="2" fill="#eee"/><rect x="1.0" y="6.6" width="2" height="2" fill="#eee"/><rect x="3.8" y="6.6" width="2" height="2" fill="#eee"/><rect x="6.6" y="6.6" width="2" height="2" fill="#eee"/></svg>
<div class="a" style="left:282px;top:101.3px;width:17px;height:17px;background:transparent;border:1px solid #7a7a7a"></div>
<svg class="a" style="left:285px;top:104px;" width="11" height="11" viewBox="0 0 11 11"><path d="M1 4 H3.5 M0.5 7 H4 M0.5 10 H5" stroke="#ddd" stroke-width="0.9"/><path d="M7 1 V10 M5.5 2.5 L7 1 L8.5 2.5 M5.5 8.5 L7 10 L8.5 8.5" stroke="#eee" stroke-width="1"/></svg>
<div class="a" style="left:302px;top:99px;width:9.5px;height:406px;background:#3f3f3f;"></div>
<svg class="a" style="left:304px;top:101.5px;" width="6" height="5" viewBox="0 0 6 5"><path d="M0 4.5 L3 0 L6 4.5Z" fill="#5e5e5e"/></svg>
<svg class="a" style="left:304px;top:498px;" width="6" height="5" viewBox="0 0 6 5"><path d="M0 0 L3 4.5 L6 0Z" fill="#5e5e5e"/></svg>
<div class="a" style="left:153.2px;top:266px;width:15px;height:71.5px;background:#434343;"></div>
<div class="t" style="left:166px;top:271px;font-size:10px;color:#d4d4d4;-webkit-text-stroke:0.1px currentColor;transform:rotate(90deg) scaleX(0.945);transform-origin:0 0">Collections</div>
<svg class="a" style="left:156px;top:325px;" width="9" height="8" viewBox="0 0 9 8"><path d="M4.5 0.5 L1 4 L4.5 7.5 M8 0.5 L4.5 4 L8 7.5" stroke="#eee" stroke-width="1.2" fill="none"/></svg>
<div class="a" style="left:171px;top:141px;width:65px;height:65px;background:#1f4a5f;border:1px solid #7fa9c0;border-radius:2px"></div>
<svg class="a" style="left:185px;top:143px;" width="40" height="35" viewBox="0 0 40 35"><rect x="8.8" y="9" width="4.6" height="14" fill="#f2bd2a"/><path d="M6 23 Q9 20 13.5 21.5 L14 29 Q12 32 9 32 Q6 31 5.5 28Z" fill="#f2bd2a"/><ellipse cx="10.8" cy="6.8" rx="3.8" ry="3.2" fill="#f0b020"/><path d="M7.5 8 Q9 11 14 11 L23 12" stroke="#505050" stroke-width="3.4" fill="none"/><path d="M23 10 L28 7 L33 8.5 V14 H29 L26 11.5 L23 13Z" fill="#f2c030"/><circle cx="24.5" cy="13.5" r="1.6" fill="#555"/><rect x="31" y="7" width="2.5" height="2" fill="#444"/></svg>
<div class="t" style="left:187.3px;top:190.84px;font-size:8.8px;color:#e0e0e0;transform:scaleX(0.9217);transform-origin:0 0;">AUBO-i5</div>
<div class="a" style="left:153.2px;top:505.8px;width:158px;height:1.8px;background:#8a8a8a;"></div>
<div class="t" style="left:276px;top:510.20px;font-size:9.5px;color:#e0e0e0;transform:scaleX(0.9660);transform-origin:0 0;">1 Item</div>
<div class="a" style="left:0px;top:522px;width:313px;height:12px;background:#2a2a2a;"></div>
<div class="a" style="left:48.5px;top:521px;width:264.5px;height:1px;background:#454545;"></div>
<div class="a" style="left:0px;top:521.5px;width:48.5px;height:12.5px;background:#2a2a2a;"></div>
<div class="t" style="left:2.5px;top:524.00px;font-size:10.5px;color:#eeeeee;transform:scaleX(0.9398);transform-origin:0 0;">eCatalog</div>
<div class="a" style="left:49px;top:522.5px;width:59px;height:12px;background:#333333;border:1px solid #484848;border-bottom:none"></div>
<div class="t" style="left:56px;top:523.50px;font-size:10.5px;color:#bdbdbd;transform:scaleX(0.9166);transform-origin:0 0;">Cell Graph</div>
<div class="a" style="left:316px;top:76px;width:502px;height:311px;background:#f8f8f8;"></div>
<div class="a" style="left:316px;top:387px;width:502px;height:3px;background:#1e1e1e;"></div>
<div class="a" style="left:818px;top:76px;width:4px;height:458px;background:#1c1c1c;"></div>
<div class="a" style="left:343px;top:79px;width:1px;height:18px;background:#6f6ff0;"></div>
<div class="a" style="left:343px;top:97px;width:17px;height:1px;background:#f06a6a;"></div>
<svg class="a" style="left:316px;top:76px" width="502" height="311" viewBox="316 76 502 311"><defs><linearGradient id="gcol" x1="0" x2="1" y1="0" y2="0"><stop offset="0" stop-color="#665828"/><stop offset="0.08" stop-color="#a48f48"/><stop offset="0.35" stop-color="#cdb05e"/><stop offset="0.62" stop-color="#c6c066"/><stop offset="0.9" stop-color="#afa252"/><stop offset="1" stop-color="#6e6230"/></linearGradient><linearGradient id="gcap" x1="0" x2="1" y1="0" y2="0"><stop offset="0" stop-color="#80692e"/><stop offset="0.12" stop-color="#ad9348"/><stop offset="0.5" stop-color="#b8a050"/><stop offset="0.88" stop-color="#ad9348"/><stop offset="1" stop-color="#80692e"/></linearGradient><linearGradient id="garm" x1="0" x2="0" y1="0" y2="1"><stop offset="0" stop-color="#1e2a30"/><stop offset="0.06" stop-color="#3c4d55"/><stop offset="0.45" stop-color="#44565e"/><stop offset="0.55" stop-color="#6a7e86"/><stop offset="0.65" stop-color="#4e6068"/><stop offset="0.94" stop-color="#3e4e56"/><stop offset="1" stop-color="#1a2228"/></linearGradient><radialGradient id="gelb" gradientUnits="userSpaceOnUse" cx="487" cy="160" r="30"><stop offset="0" stop-color="#5c6e77"/><stop offset="0.45" stop-color="#43555e"/><stop offset="1" stop-color="#2e3b41"/></radialGradient><linearGradient id="gw" x1="0" x2="1" y1="0" y2="0"><stop offset="0" stop-color="#a88e42"/><stop offset="0.5" stop-color="#c9bb62"/><stop offset="1" stop-color="#b0a050"/></linearGradient><linearGradient id="gtube" x1="0" x2="0" y1="0" y2="1"><stop offset="0" stop-color="#b09848"/><stop offset="0.5" stop-color="#cbc468"/><stop offset="1" stop-color="#a8984a"/></linearGradient><linearGradient id="gdark" x1="0" x2="1" y1="0" y2="0"><stop offset="0" stop-color="#2e3b42"/><stop offset="0.5" stop-color="#46575f"/><stop offset="1" stop-color="#2e3b42"/></linearGradient><linearGradient id="gfade" gradientUnits="userSpaceOnUse" x1="503" x2="519" y1="0" y2="0"><stop offset="0" stop-color="#fff" stop-opacity="0"/><stop offset="1" stop-color="#fff" stop-opacity="1"/></linearGradient><mask id="mfade" maskUnits="userSpaceOnUse" x="316" y="76" width="502" height="311"><rect x="316" y="76" width="502" height="311" fill="url(#gfade)"/></mask></defs><path fill-rule="evenodd" d="M441.3 325.2 A54.1 26.6 0 0 1 549.5 325.2 A54.1 26.6 0 0 1 441.3 325.2Z M452 325.2 A43.2 20.8 0 0 0 538.4 325.2 A43.2 20.8 0 0 0 452 325.2Z" fill="#acc9d9" stroke="#7eaad0" stroke-width="1"/><ellipse cx="495.7" cy="326.5" rx="29.3" ry="11" fill="#9a8238"/><ellipse cx="495.7" cy="323.5" rx="29.3" ry="12.3" fill="#c9b55e" stroke="#8f7a35" stroke-width="0.7"/><path d="M476.3 257 Q477 250 481.8 246 H510.4 Q515 250 515.2 257 V323 Q495.7 331 476.3 323Z" fill="url(#gcol)"/><ellipse cx="497" cy="258" rx="12" ry="6" fill="#cfcc72" opacity="0.55"/><ellipse cx="495.5" cy="273.8" rx="18.6" ry="9" fill="#a38c47" stroke="#86703a" stroke-width="0.7"/><ellipse cx="495.5" cy="272.5" rx="15" ry="6.5" fill="#9a8443"/><circle cx="483" cy="279" r="1" fill="#c8c070"/><circle cx="508" cy="279" r="1" fill="#c8c070"/><path d="M476.6 285 Q495.5 296 514.8 285" stroke="#8a7535" stroke-width="0.8" fill="none"/><rect x="481.8" y="186" width="28.6" height="61" fill="url(#gcol)"/><path d="M476 188 V141 C476 131 479 127.2 490 127.2 H501.3 C512.3 127.2 515.3 131 515.3 141 V186 Q495.7 193 476 188Z" fill="url(#gcap)"/><path d="M476.3 134.5 Q495.7 131 515 134.5 M476.3 149.6 Q495.7 146 515 149.6" stroke="#c9b264" stroke-width="0.8" fill="none"/><rect x="487" y="135" width="19" height="13.5" fill="#bba35a" opacity="0.7"/><path d="M496.2 151.5 C505 151.5 509 155 512 160 Q513.5 162.9 516 162.9 H605 V187.8 H496.2 C485.6 187.8 477.2 179.6 477.2 169.6 C477.2 159.6 485.6 151.5 496.2 151.5Z" fill="url(#gelb)"/><rect x="500" y="162.9" width="105" height="25" fill="url(#garm)" mask="url(#mfade)"/><path d="M604 146.7 H611.5 V164.2 H601 V149.7 Q601 146.7 604 146.7Z" fill="#34434b"/><rect x="632" y="146.7" width="17" height="24" fill="url(#gtube)"/><rect x="604.7" y="146.7" width="27.8" height="39.7" fill="#b9a24e"/><ellipse cx="620.5" cy="166.5" rx="12" ry="19.5" fill="#a68e44"/><ellipse cx="621" cy="163" rx="7" ry="11" fill="#b39b4c"/><path d="M645 170.7 Q643 175 643 180 H649 V170.7Z" fill="#b8a650"/><path d="M607.8 180 A12.4 7 0 0 1 632.6 180 V184 A12.4 12 0 0 1 607.8 184Z" fill="#34434b"/><ellipse cx="620.2" cy="179.5" rx="12.2" ry="8.5" fill="#4f6068"/><rect x="642.6" y="152" width="24" height="28" fill="url(#gw)"/><path d="M642.6 177.4 H666.6 V187 Q654.6 192 642.6 187Z" fill="#34434b"/><path d="M642.6 142 Q642.6 136.2 654.6 136.2 Q666.6 136.2 666.6 142 V153 Q654.6 158.5 642.6 153Z" fill="url(#gdark)"/><ellipse cx="654.6" cy="142" rx="12" ry="5.6" fill="#4b5c64"/><path d="M657 186.5 L671 180.5 L671 190.5Z" fill="#f0e400"/><clipPath id="cbase"><rect x="476" y="290" width="40" height="25"/></clipPath><path fill-rule="evenodd" d="M441.3 325.2 A54.1 26.6 0 0 1 549.5 325.2 A54.1 26.6 0 0 1 441.3 325.2Z M452 325.2 A43.2 20.8 0 0 0 538.4 325.2 A43.2 20.8 0 0 0 452 325.2Z" fill="#9cc0d8" opacity="0.55" clip-path="url(#cbase)"/><path d="M488.4 333.2 L495.7 325.2 L503 333.2Z" fill="#c8d820"/></svg>
<div class="a" style="left:408px;top:77.8px;width:318px;height:28.7px;background:#b6b6b6;"></div>
<svg class="a" style="left:416.8px;top:85.3px;" width="13" height="18" viewBox="0 0 13 18"><circle cx="6.5" cy="6" r="3.3" fill="none" stroke="#f2f2f2" stroke-width="2.2"/><rect x="5.4" y="0" width="2.2" height="3" fill="#f2f2f2" transform="rotate(0 6.5 6)"/><rect x="5.4" y="0" width="2.2" height="3" fill="#f2f2f2" transform="rotate(45 6.5 6)"/><rect x="5.4" y="0" width="2.2" height="3" fill="#f2f2f2" transform="rotate(90 6.5 6)"/><rect x="5.4" y="0" width="2.2" height="3" fill="#f2f2f2" transform="rotate(135 6.5 6)"/><rect x="5.4" y="0" width="2.2" height="3" fill="#f2f2f2" transform="rotate(180 6.5 6)"/><rect x="5.4" y="0" width="2.2" height="3" fill="#f2f2f2" transform="rotate(225 6.5 6)"/><rect x="5.4" y="0" width="2.2" height="3" fill="#f2f2f2" transform="rotate(270 6.5 6)"/><rect x="5.4" y="0" width="2.2" height="3" fill="#f2f2f2" transform="rotate(315 6.5 6)"/><path d="M4.6 15.5 H8.4 L6.5 17.5Z" fill="#f2f2f2"/></svg>
<svg class="a" style="left:437.5px;top:82.8px;" width="21" height="21" viewBox="0 0 21 21"><circle cx="10.3" cy="10.3" r="9.3" fill="none" stroke="#f0f0f0" stroke-width="1.3"/><path d="M5 6.5 V14 M13 6.5 L8.5 10.3 L13 14Z M16.5 6.5 L12 10.3 L16.5 14Z" stroke="#f0f0f0" stroke-width="1.3" fill="#f0f0f0"/></svg>
<svg class="a" style="left:461.5px;top:82.8px;" width="21" height="21" viewBox="0 0 21 21"><circle cx="10.3" cy="10.3" r="9.3" fill="none" stroke="#f0f0f0" stroke-width="1.3"/><path d="M7.5 5.5 L15 10.3 L7.5 15Z" fill="#f0f0f0"/></svg>
<div class="t" style="left:488.6px;top:84.21px;font-size:14.8px;color:#eef2f4;transform:scaleX(0.8931);transform-origin:0 0;-webkit-text-stroke:0;">0:00:00</div>
<div class="t" style="left:559px;top:88.76px;font-size:8px;color:#e6cf95;transform:scaleX(1.1250);transform-origin:0 0;">x</div>
<div class="t" style="left:568px;top:87.86px;font-size:9px;color:#e6cf95;transform:scaleX(0.9420);transform-origin:0 0;">0.04</div>
<div class="a" style="left:602px;top:92px;width:6px;height:1.3px;background:#9ec3d6;"></div>
<div class="a" style="left:613px;top:92px;width:6px;height:1.3px;background:#9ec3d6;"></div>
<div class="a" style="left:620px;top:92px;width:37px;height:1.2px;background:#f4f4f4;"></div>
<div class="a" style="left:620px;top:89px;width:1px;height:7px;background:#f4f4f4;"></div>
<svg class="a" style="left:662px;top:88px;" width="8" height="8" viewBox="0 0 8 8"><path d="M4 0 V8 M0 4 H8" stroke="#9ec3d6" stroke-width="1.3"/></svg>
<svg class="a" style="left:675px;top:84.5px;" width="8" height="11" viewBox="0 0 8 11"><path d="M0.6 0.6 H5.5 L7.4 2.5 V10.4 H0.6Z" fill="none" stroke="#f0f0f0" stroke-width="1"/><path d="M1.8 8.5 C3 6 3.5 4 4 2.5 C4.5 5 5.5 7 6.5 7.5 C4.5 7 3 7.5 1.8 8.5Z" fill="none" stroke="#f0f0f0" stroke-width="0.7"/></svg>
<svg class="a" style="left:687.5px;top:86.5px;" width="13" height="7" viewBox="0 0 13 7"><rect x="0" y="0.5" width="8.5" height="6" rx="1" fill="#f4f4f4"/><path d="M8.5 3.5 L12.5 0.5 V6.5Z" fill="#f4f4f4"/></svg>
<svg class="a" style="left:703px;top:84px;" width="14" height="11" viewBox="0 0 14 11"><path d="M0.5 0.5 L5 10.5 L9.5 0.5 M3 0.5 L6.5 8 M5.5 0.5 L8 6" stroke="#f2f2f2" stroke-width="1.1" fill="none"/><path d="M10 1 H13.5 L11.8 3.5Z" fill="#f2f2f2"/></svg>
<div class="a" style="left:316px;top:153px;width:27px;height:155px;background:#ebebeb;"></div>
<svg class="a" style="left:324px;top:161px;" width="12" height="11" viewBox="0 0 12 11"><path d="M0.8 4 V0.8 H4 M0.8 0.8 L4 4 M11.2 4 V0.8 H8 M11.2 0.8 L8 4 M0.8 7 V10.2 H4 M0.8 10.2 L4 7 M11.2 7 V10.2 H8 M11.2 10.2 L8 7" stroke="#94d48a" stroke-width="1.3" fill="none"/></svg>
<svg class="a" style="left:323.5px;top:178px;" width="12" height="11" viewBox="0 0 12 11"><rect x="0.5" y="0.5" width="11" height="10" rx="1.2" fill="#e4e4e4" stroke="#bdbdbd" stroke-width="1"/><path d="M2.5 4.2 V2.5 H4.2 M2.5 2.5 L4.5 4.5 M9.5 4.2 V2.5 H7.8 M9.5 2.5 L7.5 4.5 M2.5 6.8 V8.5 H4.2 M2.5 8.5 L4.5 6.5 M9.5 6.8 V8.5 H7.8 M9.5 8.5 L7.5 6.5" stroke="#94d48a" stroke-width="1" fill="none"/></svg>
<div class="a" style="left:324px;top:195px;width:11px;height:1px;background:#d2d2d2;"></div>
<svg class="a" style="left:323px;top:200.5px;" width="12" height="13" viewBox="0 0 12 13"><rect x="0" y="0" width="12" height="13" fill="#b6d6ec"/><path d="M11 3.5 H6 Q3 3.5 3 6.5 Q3 9.5 6 9.5 H11 M6 6.5 H11 M6 3.5 V9.5" stroke="#e6c080" stroke-width="0.9" fill="none"/></svg>
<svg class="a" style="left:323px;top:220px;" width="12" height="12" viewBox="0 0 12 12"><rect x="0" y="0" width="12" height="12" fill="#b6d6ec"/><path d="M2 4 L4.5 1.8 H10 V8 L7.5 10.2 H2Z M2 4 H7.5 V10.2 M7.5 4 L10 1.8" stroke="#90aab8" stroke-width="0.8" fill="none"/></svg>
<div class="a" style="left:324px;top:238px;width:11px;height:1px;background:#d2d2d2;"></div>
<svg class="a" style="left:320px;top:243.5px;" width="18" height="11" viewBox="0 0 18 11"><path d="M0.5 3 L3 0.5 H10.5 V8 L8 10.5 H0.5Z" fill="#f6dca0" stroke="#e8c888" stroke-width="0.7"/><path d="M0.5 3 H8 V10.5 M8 3 L10.5 0.5" stroke="#e8c888" stroke-width="0.7" fill="none"/><rect x="2.5" y="5" width="3.5" height="3.5" fill="none" stroke="#e0b870" stroke-width="0.6"/><path d="M13 4.2 H17.5 L15.25 7.2Z" fill="#5a5a5a"/></svg>
<svg class="a" style="left:320px;top:258.5px;" width="18" height="11" viewBox="0 0 18 11"><path d="M1.5 0.5 V9.5 H9.5 M1.5 9.5 L7 4.5" stroke="#9a9a9a" stroke-width="0.8" fill="none"/><path d="M6 4 L7.5 4 L7.2 5.5" stroke="#9a9a9a" stroke-width="0.7" fill="none"/><path d="M13 4.2 H17.5 L15.25 7.2Z" fill="#5a5a5a"/></svg>
<svg class="a" style="left:320px;top:274px;" width="18" height="11" viewBox="0 0 18 11"><path d="M1.5 0.5 V9.5" stroke="#8cc8e8" stroke-width="0.9"/><path d="M1.5 9.5 H9.5" stroke="#e0b070" stroke-width="0.9"/><path d="M1.5 9.5 L7 4.5" stroke="#70c070" stroke-width="0.9"/><path d="M13 4.2 H17.5 L15.25 7.2Z" fill="#5a5a5a"/></svg>
<svg class="a" style="left:320px;top:293px;" width="18" height="11" viewBox="0 0 18 11"><path d="M5.5 0.5 L10.5 3 V8.5 L5.5 10.5 L0.5 8.5 V3Z" fill="#a8cc98" stroke="#999" stroke-width="0.6"/><path d="M0.5 3 L5.5 5 L10.5 3 L5.5 0.5Z" fill="#a8d8f0"/><path d="M0.5 3 L5.5 5 V10.5 L0.5 8.5Z" fill="#e8c090"/><circle cx="3" cy="7" r="0.9" fill="#e04040"/><path d="M13 4.2 H17.5 L15.25 7.2Z" fill="#5a5a5a"/></svg>
<svg class="a" style="left:326.5px;top:303.3px;" width="75" height="75" viewBox="0 0 75 75"><rect x="-1.5" y="-1.5" width="77" height="77" fill="#fdfdfd"/><path d="M3.7 0.3 H70.1 L54 17 H19.5Z" fill="#828282"/><path d="M0.2 3.5 L17.2 20.5 V52.2 L0.2 69.9Z" fill="#828282"/><path d="M73.2 3.5 L55.5 20.5 V52.2 L73.2 69.9Z" fill="#828282"/><path d="M3.7 73.4 L19.5 57.2 H54 L70.1 73.4Z" fill="#828282"/><rect x="22.6" y="22" width="28.6" height="28.6" fill="#828282"/><path d="M22.2 51 H52 L55.8 56 H18Z" fill="#3ef2fa"/></svg>
<div class="t" style="left:359.6px;top:306.39px;font-size:11.5px;color:#f8f8f8;font-weight:bold;">B</div>
<div class="t" style="left:332px;top:333.79px;font-size:11.5px;color:#f8f8f8;font-weight:bold;">L</div>
<div class="t" style="left:359.8px;top:333.79px;font-size:11.5px;color:#f8f8f8;font-weight:bold;">T</div>
<div class="t" style="left:386.3px;top:333.79px;font-size:11.5px;color:#f8f8f8;font-weight:bold;">R</div>
<div class="t" style="left:359.8px;top:361.89px;font-size:11.5px;color:#f8f8f8;font-weight:bold;">F</div>
<div class="a" style="left:316px;top:390px;width:502px;height:144px;background:#282828;"></div>
<div class="a" style="left:316px;top:390px;width:502px;height:21px;background:#1f5a72;"></div>
<div class="a" style="left:316px;top:410.5px;width:502px;height:1px;background:#1c3f50;"></div>
<div class="a" style="left:316px;top:411px;width:1.5px;height:123px;background:#1f1f1f;"></div>
<div class="t" style="left:321.5px;top:394.47px;font-size:11.3px;color:#f2f2f2;transform:scaleX(1.0023);transform-origin:0 0;">Output</div>
<svg class="a" style="left:777.5px;top:395.5px;" width="9" height="10" viewBox="0 0 9 10"><path d="M1.2 0.5 H7.8 V1.8 H6.6 L6.9 5.2 L8 6.4 V7.2 H1 V6.4 L2.1 5.2 L2.4 1.8 H1.2Z" fill="#f2f2f2"/><rect x="3.8" y="7" width="1.4" height="3" fill="#f2f2f2"/></svg>
<svg class="a" style="left:797.5px;top:396.5px;" width="9" height="9" viewBox="0 0 9 9"><path d="M1 1 L8 8 M8 1 L1 8" stroke="#f4f4f4" stroke-width="1.9"/></svg>
<div class="t" style="left:317.8px;top:413.22px;font-size:9.7px;color:#4fa02c;transform:scaleX(0.9503);transform-origin:0 0;">Traceback (most recent call last):</div>
<div class="t" style="left:323.7px;top:426.77px;font-size:9.7px;color:#4fa02c;transform:scaleX(0.9992);transform-origin:0 0;">File "file:///C:\Users\Administrator\Documents\Visual Components\4.2\My Commands</div>
<div class="t" style="left:317.3px;top:440.32px;font-size:9.7px;color:#4fa02c;transform:scaleX(0.9326);transform-origin:0 0;">\Blenderer_2_1_0__2020_09_29\Blenderer.py::", line 813, in CallStill</div>
<div class="t" style="left:323.7px;top:453.87px;font-size:9.7px;color:#4fa02c;transform:scaleX(0.9992);transform-origin:0 0;">File "file:///C:\Users\Administrator\Documents\Visual Components\4.2\My Commands</div>
<div class="t" style="left:317.3px;top:467.42px;font-size:9.7px;color:#4fa02c;transform:scaleX(0.9438);transform-origin:0 0;">\Blenderer_2_1_0__2020_09_29\Blenderer.py::", line 570, in getMaterialFiles</div>
<div class="t" style="left:317.8px;top:480.97px;font-size:9.7px;color:#4fa02c;transform:scaleX(0.9827);transform-origin:0 0;">NameError: Attribute or method 'TEMPDATA_URI' not found.</div>
<div class="a" style="left:822px;top:75px;width:213px;height:459px;background:#2a2a2a;"></div>
<div class="a" style="left:821px;top:75px;width:1px;height:447px;background:#3a3a3a;"></div>
<div class="a" style="left:822px;top:75px;width:213px;height:21.5px;background:#333333;border-top:1px solid #393939"></div>
<div class="a" style="left:822px;top:96.5px;width:213px;height:1px;background:#3a3a3a;"></div>
<div class="t" style="left:827px;top:78.64px;font-size:12px;color:#f0f0f0;transform:scaleX(0.8744);transform-origin:0 0;">Blenderer 2.0</div>
<svg class="a" style="left:1019.5px;top:82.5px;" width="9" height="9" viewBox="0 0 9 9"><path d="M1 1 L8 8 M8 1 L1 8" stroke="#f4f4f4" stroke-width="1.9"/></svg>
<div class="a" style="left:824px;top:103.7px;width:87px;height:20px;background:#2e2e2e;border:1px solid #4e4e4e"></div>
<div class="t" style="left:845.78843796875px;top:108.00px;font-size:10.5px;color:#ececec;transform:scaleX(0.9300);transform-origin:0 0;">Animation</div>
<div class="a" style="left:911px;top:103.7px;width:59px;height:20px;background:#2e2e2e;border:1px solid #4e4e4e"></div>
<div class="t" style="left:932.086689609375px;top:108.00px;font-size:10.5px;color:#ececec;transform:scaleX(0.9300);transform-origin:0 0;">Env</div>
<div class="a" style="left:970px;top:103.7px;width:66px;height:20px;background:#2e2e2e;border:1px solid #4e4e4e"></div>
<div class="t" style="left:991.875986640625px;top:108.00px;font-size:10.5px;color:#ececec;transform:scaleX(0.9300);transform-origin:0 0;">Floor</div>
<div class="a" style="left:824px;top:143px;width:212px;height:158px;background:#262626;border:1px solid #4e4e4e"></div>
<div class="a" style="left:824px;top:123.5px;width:51.5px;height:20.5px;background:#262626;border:1px solid #4e4e4e;border-bottom:none"></div>
<div class="t" style="left:833px;top:127.50px;font-size:10.5px;color:#f0f0f0;transform:scaleX(0.9300);transform-origin:0 0;">Default</div>
<div class="a" style="left:876px;top:124.5px;width:42.5px;height:19px;background:#2e2e2e;border:1px solid #4e4e4e"></div>
<div class="t" style="left:884.221201328125px;top:129.00px;font-size:10.5px;color:#ececec;transform:scaleX(0.9300);transform-origin:0 0;">Lights</div>
<div class="a" style="left:919px;top:124.5px;width:58.5px;height:19px;background:#2e2e2e;border:1px solid #4e4e4e"></div>
<div class="t" style="left:926.533708046875px;top:129.00px;font-size:10.5px;color:#ececec;transform:scaleX(0.9300);transform-origin:0 0;">Advanced</div>
<div class="a" style="left:978px;top:124.5px;width:58px;height:19px;background:#2e2e2e;border:1px solid #4e4e4e"></div>
<div class="t" style="left:987.1932995703125px;top:129.00px;font-size:10.5px;color:#ececec;transform:scaleX(0.9300);transform-origin:0 0;">Materials</div>
<div class="t" style="left:828px;top:155.35px;font-size:9px;color:#eeeeee;transform:scaleX(0.9507);transform-origin:0 0;">Output file</div>
<div class="a" style="left:891px;top:152px;width:123px;height:16px;background:#ececec;"></div>
<div class="t" style="left:893px;top:155.16px;font-size:9px;color:#202020;transform:scaleX(0.8904);transform-origin:0 0;">C:\Users\Administrator\Pictures\</div>
<div class="a" style="left:1017px;top:152px;width:14.5px;height:15.5px;background:#262626;border:1px solid #7a7a7a"></div>
<div class="a" style="left:1021px;top:163px;width:6px;height:1.2px;background:#eee;"></div>
<div class="t" style="left:828px;top:172.35px;font-size:9px;color:#eeeeee;transform:scaleX(0.8568);transform-origin:0 0;">Samples</div>
<div class="a" style="left:891px;top:170.5px;width:140.5px;height:13px;background:#ececec;"></div>
<div class="t" style="left:893px;top:172.35px;font-size:9px;color:#202020;">8</div>
<div class="t" style="left:828px;top:187.85px;font-size:9px;color:#eeeeee;transform:scaleX(0.8936);transform-origin:0 0;">Resolution</div>
<div class="a" style="left:891px;top:186px;width:140.5px;height:13.5px;background:#ececec;"></div>
<div class="t" style="left:894px;top:188.35px;font-size:9px;color:#202020;transform:scaleX(0.7858);transform-origin:0 0;">1920x1080</div>
<svg class="a" style="left:1023px;top:191px;" width="7" height="4" viewBox="0 0 7 4"><path d="M0 0 H7 L3.5 4Z" fill="#707070"/></svg>
<div class="t" style="left:828px;top:203.35px;font-size:9px;color:#6c6c6c;transform:scaleX(0.7724);transform-origin:0 0;">ResX</div>
<div class="a" style="left:890.5px;top:201.5px;width:141px;height:14px;background:#282828;border:1px solid #4c4c4c"></div>
<div class="t" style="left:893.5px;top:203.85px;font-size:9px;color:#6c6c6c;transform:scaleX(0.7991);transform-origin:0 0;">1920</div>
<div class="t" style="left:828px;top:218.85px;font-size:9px;color:#6c6c6c;transform:scaleX(0.7724);transform-origin:0 0;">ResY</div>
<div class="a" style="left:890.5px;top:216.5px;width:141px;height:14px;background:#282828;border:1px solid #4c4c4c"></div>
<div class="t" style="left:893.5px;top:219.35px;font-size:9px;color:#6c6c6c;transform:scaleX(0.7991);transform-origin:0 0;">1080</div>
<div class="t" style="left:828px;top:233.85px;font-size:9px;color:#eeeeee;transform:scaleX(0.8326);transform-origin:0 0;">Page</div>
<div class="a" style="left:891px;top:233px;width:140.5px;height:13.2px;background:#ececec;"></div>
<div class="t" style="left:894px;top:234.85px;font-size:9px;color:#202020;transform:scaleX(0.7948);transform-origin:0 0;">Landscape</div>
<svg class="a" style="left:1023px;top:238px;" width="7" height="4" viewBox="0 0 7 4"><path d="M0 0 H7 L3.5 4Z" fill="#707070"/></svg>
<div class="t" style="left:828px;top:249.35px;font-size:9px;color:#eeeeee;transform:scaleX(0.8994);transform-origin:0 0;">Lighting Preset</div>
<div class="a" style="left:891px;top:249px;width:140.5px;height:12.5px;background:#ececec;"></div>
<div class="t" style="left:894px;top:250.35px;font-size:9px;color:#202020;transform:scaleX(0.8176);transform-origin:0 0;">3 Light Studio</div>
<svg class="a" style="left:1023px;top:253.5px;" width="7" height="4" viewBox="0 0 7 4"><path d="M0 0 H7 L3.5 4Z" fill="#707070"/></svg>
<div class="a" style="left:890.5px;top:264px;width:141px;height:13.5px;background:#262626;border:1px solid #7a7a7a"></div>
<div class="t" style="left:949.5px;top:265.86px;font-size:9px;color:#eeeeee;transform:scaleX(0.8131);transform-origin:0 0;">Render</div>
<div class="t" style="left:828px;top:281.36px;font-size:9px;color:#eeeeee;transform:scaleX(0.8447);transform-origin:0 0;">Reuse Previous...</div>
<div class="a" style="left:890.5px;top:280.5px;width:11px;height:11.5px;background:transparent;border:1px solid #9a9a9a"></div>
<div class="a" style="left:979.4px;top:503.6px;width:54px;height:15.4px;background:#262626;border:1px solid #6a6a6a"></div>
<div class="t" style="left:997px;top:506.86px;font-size:9px;color:#eeeeee;transform:scaleX(0.8040);transform-origin:0 0;">Close</div>
<div class="a" style="left:822px;top:521.5px;width:213px;height:13px;background:#1e1e1e;"></div>
<div class="a" style="left:821px;top:521px;width:113px;height:14px;background:#333333;border:1px solid #4e4e4e;border-bottom:none"></div>
<div class="t" style="left:828px;top:527.04px;font-size:11px;color:#c8c8c8;transform:scaleX(0.8995);transform-origin:0 0;">Component Properties</div>
<div class="a" style="left:934.5px;top:521.5px;width:69px;height:13px;background:#2a2a2a;"></div>
<div class="t" style="left:940.6px;top:527.04px;font-size:11px;color:#f2f2f2;transform:scaleX(0.8737);transform-origin:0 0;">Blenderer 2.0</div>
<div class="a" style="left:1004px;top:521px;width:32px;height:14px;background:#2e2e2e;border:1px solid #4e4e4e;border-bottom:none"></div></body></html>
